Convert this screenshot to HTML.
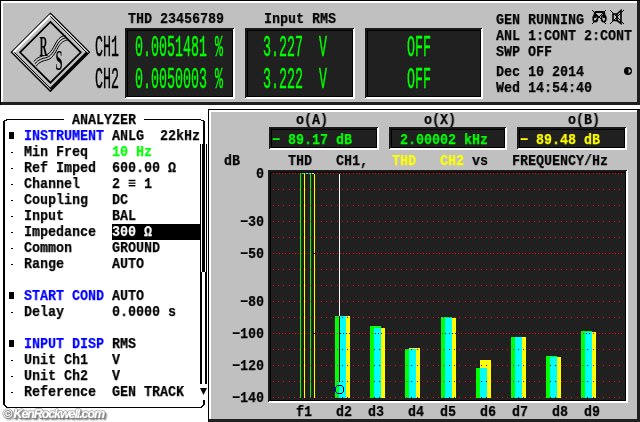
<!DOCTYPE html>
<html><head><meta charset="utf-8"><style>
html,body{margin:0;padding:0;}
body{width:640px;height:422px;overflow:hidden;position:relative;background:#fff;}
.s{position:absolute;font-family:"Liberation Mono",monospace;font-weight:bold;font-size:15px;letter-spacing:0;line-height:16px;white-space:nowrap;transform-origin:0 0;transform:scaleX(0.88889);will-change:transform;-webkit-text-stroke:0.25px currentColor;}
.l{position:absolute;font-family:"Liberation Mono",monospace;font-weight:normal;-webkit-text-stroke:0.2px currentColor;font-size:13.33px;line-height:12px;white-space:nowrap;transform-origin:0 0;transform:scaleY(2.21);will-change:transform;}
</style></head><body>
<div style="position:absolute;left:0px;top:0px;width:640px;height:105px;background:#c0c0c0;"></div>
<div style="position:absolute;left:0px;top:0px;width:640px;height:1px;background:#000;"></div>
<div style="position:absolute;left:0px;top:0px;width:1px;height:105px;background:#000;"></div>
<div style="position:absolute;left:1px;top:1px;width:638px;height:2px;background:#fff;"></div>
<div style="position:absolute;left:1px;top:1px;width:2px;height:103px;background:#fff;"></div>
<div style="position:absolute;left:1px;top:102px;width:639px;height:3px;background:#202020;"></div>
<div style="position:absolute;left:637px;top:1px;width:3px;height:104px;background:#202020;"></div>
<svg style="position:absolute;left:0;top:0;will-change:transform" width="100" height="104" viewBox="0 0 100 104">
<polygon points="50.4,13.299999999999997 89.4,52.3 50.4,91.3 11.399999999999999,52.3" fill="none" stroke="#000" stroke-width="1.3"/>
<polyline points="13.399999999999999,52.3 50.4,15.299999999999997 " fill="none" stroke="#fff" stroke-width="2.2"/>
<polyline points="50.4,14.899999999999997 87.80000000000001,52.3" fill="none" stroke="#fff" stroke-width="1"/>
<polyline points="50.4,16.299999999999997 86.4,52.3" fill="none" stroke="#000" stroke-width="1"/>
<polyline points="87.2,52.3 50.4,89.1" fill="none" stroke="#000" stroke-width="2.6"/>
<polyline points="50.4,88.3 14.399999999999999,52.3" fill="none" stroke="#000" stroke-width="1"/>
<polygon points="50.4,21.9 80.8,52.3 50.4,82.69999999999999 20.0,52.3" fill="none" stroke="#000" stroke-width="1.7"/>
<g fill="none" stroke="#000" stroke-width="1">
<path d="M34.0,61.5 C37.0,57.0 41.0,56.5 46.0,55.0 C51.0,53.5 54.0,46.0 57.0,41.0 C60.0,37.0 62.0,36.0 65.5,35.5"/>
<path d="M35.1,63.8 C38.1,59.3 42.1,58.8 47.1,57.3 C52.1,55.8 55.1,48.3 58.1,43.3 C61.1,39.3 63.1,38.3 66.6,37.8"/>
<path d="M36.2,66.1 C39.2,61.6 43.2,61.1 48.2,59.6 C53.2,58.1 56.2,50.6 59.2,45.6 C62.2,41.6 64.2,40.6 67.7,40.1"/>
</g>
<g transform="translate(39.5 55.8) scale(0.62 1.62)"><text x="0" y="0" font-family="Liberation Serif" font-weight="bold" font-size="18">R</text></g>
<g transform="translate(55.6 70.3) scale(0.7 1.62)"><text x="0" y="0" font-family="Liberation Serif" font-weight="bold" font-size="18">S</text></g>
</svg>
<div style="position:absolute;left:125px;top:28px;width:110px;height:71px;background:#fff;"></div>
<div style="position:absolute;left:125px;top:28px;width:108px;height:69px;background:#000;"></div>
<div style="position:absolute;left:125px;top:28px;width:108px;height:2px;background:#1a1a1a;"></div>
<div style="position:absolute;left:125px;top:28px;width:2px;height:69px;background:#1a1a1a;"></div>
<div style="position:absolute;left:128px;top:31px;width:104px;height:65px;background:#202020;"></div>
<div style="position:absolute;left:233px;top:28px;width:1px;height:1px;background:#000;"></div>
<div style="position:absolute;left:125px;top:97px;width:1px;height:1px;background:#000;"></div>
<div style="position:absolute;left:245px;top:28px;width:110px;height:71px;background:#fff;"></div>
<div style="position:absolute;left:245px;top:28px;width:108px;height:69px;background:#000;"></div>
<div style="position:absolute;left:245px;top:28px;width:108px;height:2px;background:#1a1a1a;"></div>
<div style="position:absolute;left:245px;top:28px;width:2px;height:69px;background:#1a1a1a;"></div>
<div style="position:absolute;left:248px;top:31px;width:104px;height:65px;background:#202020;"></div>
<div style="position:absolute;left:353px;top:28px;width:1px;height:1px;background:#000;"></div>
<div style="position:absolute;left:245px;top:97px;width:1px;height:1px;background:#000;"></div>
<div style="position:absolute;left:365px;top:28px;width:118px;height:71px;background:#fff;"></div>
<div style="position:absolute;left:365px;top:28px;width:116px;height:69px;background:#000;"></div>
<div style="position:absolute;left:365px;top:28px;width:116px;height:2px;background:#1a1a1a;"></div>
<div style="position:absolute;left:365px;top:28px;width:2px;height:69px;background:#1a1a1a;"></div>
<div style="position:absolute;left:368px;top:31px;width:112px;height:65px;background:#202020;"></div>
<div style="position:absolute;left:481px;top:28px;width:1px;height:1px;background:#000;"></div>
<div style="position:absolute;left:365px;top:97px;width:1px;height:1px;background:#000;"></div>
<div class="s" style="left:128px;top:12px;color:#000;">THD&nbsp;23456789</div>
<div class="s" style="left:264px;top:12px;color:#000;">Input&nbsp;RMS</div>
<div class="l" style="left:95px;top:36px;color:#000">CH1</div>
<div class="l" style="left:95px;top:68px;color:#000">CH2</div>
<div class="l" style="left:135px;top:36px;color:#00ff00">0.0051481&nbsp;%</div>
<div class="l" style="left:135px;top:68px;color:#00ff00">0.0050003&nbsp;%</div>
<div class="l" style="left:263px;top:36px;color:#00ff00">3.227&nbsp;&nbsp;V</div>
<div class="l" style="left:263px;top:68px;color:#00ff00">3.222&nbsp;&nbsp;V</div>
<div class="l" style="left:407px;top:36px;color:#00ff00">OFF</div>
<div class="l" style="left:407px;top:68px;color:#00ff00">OFF</div>
<div class="s" style="left:496px;top:13px;color:#000;">GEN&nbsp;RUNNING</div>
<div class="s" style="left:496px;top:29px;color:#000;">ANL&nbsp;1:CONT&nbsp;2:CONT</div>
<div class="s" style="left:496px;top:45px;color:#000;">SWP&nbsp;OFF</div>
<div class="s" style="left:496px;top:65px;color:#000;">Dec&nbsp;10&nbsp;2014</div>
<div class="s" style="left:496px;top:81px;color:#000;">Wed&nbsp;14:54:40</div>
<svg style="position:absolute;left:588px;top:6px" width="50" height="74" viewBox="588 6 50 74">
<g stroke="#000" fill="none">
<path d="M592,10 L606,24 M606,10 L592,24" stroke-width="1"/>
<path d="M594.8,18 V13.5 Q594.8,12 596.5,12 H602.5 Q604.2,12 604.2,13.5 V18" stroke-width="2.2"/>
<ellipse cx="595.3" cy="18.5" rx="2.2" ry="3.2" stroke-width="1.6"/>
<ellipse cx="603.7" cy="18.5" rx="2.2" ry="3.2" stroke-width="1.6"/>
<path d="M610,10 L624,24 M624,10 L610,24" stroke-width="1"/>
<path d="M613,14 H617 V20.5 H613 Z" stroke-width="1.6"/>
<path d="M617,14 L621,10.5 V23.5 L617,20.5" stroke-width="1.6"/>
</g>
<circle cx="628" cy="71" r="4" fill="#000"/>
<polygon points="628.5,68.3 631.3,71 628.5,73.7" fill="#c0c0c0"/>
</svg>
<div style="position:absolute;left:6px;top:119px;width:58px;height:1px;background:#000;"></div>
<div style="position:absolute;left:144px;top:119px;width:57px;height:1px;background:#000;"></div>
<div style="position:absolute;left:4px;top:120px;width:3px;height:1px;background:#000;"></div>
<div style="position:absolute;left:3px;top:121px;width:2px;height:1px;background:#000;"></div>
<div style="position:absolute;left:3px;top:122px;width:2px;height:282px;background:#000;"></div>
<div style="position:absolute;left:3px;top:404px;width:2px;height:1px;background:#000;"></div>
<div style="position:absolute;left:4px;top:405px;width:2px;height:1px;background:#000;"></div>
<div style="position:absolute;left:5px;top:406px;width:2px;height:1px;background:#000;"></div>
<div style="position:absolute;left:6px;top:407px;width:196px;height:1px;background:#000;"></div>
<div style="position:absolute;left:201px;top:120px;width:3px;height:1px;background:#000;"></div>
<div style="position:absolute;left:203px;top:121px;width:2px;height:1px;background:#000;"></div>
<div style="position:absolute;left:203px;top:122px;width:2px;height:22px;background:#000;"></div>
<div style="position:absolute;left:203px;top:400px;width:2px;height:5px;background:#000;"></div>
<div style="position:absolute;left:202px;top:405px;width:2px;height:1px;background:#000;"></div>
<div style="position:absolute;left:201px;top:406px;width:2px;height:1px;background:#000;"></div>
<div class="s" style="left:72px;top:113px;color:#000;">ANALYZER</div>
<div style="position:absolute;left:9px;top:132px;width:5px;height:7px;background:#000;"></div>
<div class="s" style="left:24px;top:129px;color:#0000ff;">INSTRUMENT</div>
<div class="s" style="left:112px;top:129px;color:#000;">ANLG&nbsp;&nbsp;22kHz</div>
<div style="position:absolute;left:11px;top:152px;width:2px;height:1px;background:#000;"></div>
<div class="s" style="left:24px;top:145px;color:#000;">Min&nbsp;Freq</div>
<div class="s" style="left:112px;top:145px;color:#00ff00;">10&nbsp;Hz</div>
<div style="position:absolute;left:11px;top:168px;width:2px;height:1px;background:#000;"></div>
<div class="s" style="left:24px;top:161px;color:#000;">Ref&nbsp;Imped</div>
<div class="s" style="left:112px;top:161px;color:#000;">600.00&nbsp;Ω</div>
<div style="position:absolute;left:11px;top:184px;width:2px;height:1px;background:#000;"></div>
<div class="s" style="left:24px;top:177px;color:#000;">Channel</div>
<div class="s" style="left:112px;top:177px;color:#000;">2&nbsp;≡&nbsp;1</div>
<div style="position:absolute;left:11px;top:200px;width:2px;height:1px;background:#000;"></div>
<div class="s" style="left:24px;top:193px;color:#000;">Coupling</div>
<div class="s" style="left:112px;top:193px;color:#000;">DC</div>
<div style="position:absolute;left:11px;top:216px;width:2px;height:1px;background:#000;"></div>
<div class="s" style="left:24px;top:209px;color:#000;">Input</div>
<div class="s" style="left:112px;top:209px;color:#000;">BAL</div>
<div style="position:absolute;left:11px;top:232px;width:2px;height:1px;background:#000;"></div>
<div class="s" style="left:24px;top:225px;color:#000;">Impedance</div>
<div style="position:absolute;left:112px;top:224px;width:89px;height:16px;background:#000;"></div>
<div class="s" style="left:112px;top:225px;color:#fff;">300&nbsp;Ω</div>
<div style="position:absolute;left:11px;top:248px;width:2px;height:1px;background:#000;"></div>
<div class="s" style="left:24px;top:241px;color:#000;">Common</div>
<div class="s" style="left:112px;top:241px;color:#000;">GROUND</div>
<div style="position:absolute;left:11px;top:264px;width:2px;height:1px;background:#000;"></div>
<div class="s" style="left:24px;top:257px;color:#000;">Range</div>
<div class="s" style="left:112px;top:257px;color:#000;">AUTO</div>
<div style="position:absolute;left:9px;top:292px;width:5px;height:7px;background:#000;"></div>
<div class="s" style="left:24px;top:289px;color:#0000ff;">START&nbsp;COND</div>
<div class="s" style="left:112px;top:289px;color:#000;">AUTO</div>
<div style="position:absolute;left:11px;top:312px;width:2px;height:1px;background:#000;"></div>
<div class="s" style="left:24px;top:305px;color:#000;">Delay</div>
<div class="s" style="left:112px;top:305px;color:#000;">0.0000&nbsp;s</div>
<div style="position:absolute;left:9px;top:340px;width:5px;height:7px;background:#000;"></div>
<div class="s" style="left:24px;top:337px;color:#0000ff;">INPUT&nbsp;DISP</div>
<div class="s" style="left:112px;top:337px;color:#000;">RMS</div>
<div style="position:absolute;left:11px;top:360px;width:2px;height:1px;background:#000;"></div>
<div class="s" style="left:24px;top:353px;color:#000;">Unit&nbsp;Ch1</div>
<div class="s" style="left:112px;top:353px;color:#000;">V</div>
<div style="position:absolute;left:11px;top:376px;width:2px;height:1px;background:#000;"></div>
<div class="s" style="left:24px;top:369px;color:#000;">Unit&nbsp;Ch2</div>
<div class="s" style="left:112px;top:369px;color:#000;">V</div>
<div style="position:absolute;left:11px;top:392px;width:2px;height:1px;background:#000;"></div>
<div class="s" style="left:24px;top:385px;color:#000;">Reference</div>
<div class="s" style="left:112px;top:385px;color:#000;">GEN&nbsp;TRACK</div>
<div style="position:absolute;left:200px;top:144px;width:1px;height:128px;background:#000;"></div>
<div style="position:absolute;left:206px;top:144px;width:1px;height:128px;background:#000;"></div>
<div style="position:absolute;left:202px;top:144px;width:3px;height:128px;background:#000;"></div>
<div style="position:absolute;left:200px;top:272px;width:2px;height:112px;background:#000;"></div>
<div style="position:absolute;left:205px;top:272px;width:2px;height:112px;background:#000;"></div>
<svg style="position:absolute;left:199px;top:387px" width="10" height="10" viewBox="199 387 10 10"><polygon points="200,388 207,388 203.5,395" fill="#000"/></svg>
<div style="position:absolute;left:208px;top:109px;width:432px;height:313px;background:#c0c0c0;"></div>
<div style="position:absolute;left:208px;top:109px;width:432px;height:1px;background:#000;"></div>
<div style="position:absolute;left:208px;top:109px;width:1px;height:313px;background:#000;"></div>
<div style="position:absolute;left:209px;top:110px;width:430px;height:2px;background:#fff;"></div>
<div style="position:absolute;left:209px;top:110px;width:2px;height:311px;background:#fff;"></div>
<div style="position:absolute;left:209px;top:419px;width:431px;height:3px;background:#202020;"></div>
<div style="position:absolute;left:637px;top:110px;width:3px;height:312px;background:#202020;"></div>
<div class="s" style="left:296px;top:113px;color:#000;">o(A)</div>
<div class="s" style="left:424px;top:113px;color:#000;">o(X)</div>
<div class="s" style="left:568px;top:113px;color:#000;">o(B)</div>
<div style="position:absolute;left:269px;top:127px;width:110px;height:23px;background:#fff;"></div>
<div style="position:absolute;left:269px;top:127px;width:108px;height:21px;background:#000;"></div>
<div style="position:absolute;left:269px;top:127px;width:108px;height:2px;background:#1a1a1a;"></div>
<div style="position:absolute;left:269px;top:127px;width:2px;height:21px;background:#1a1a1a;"></div>
<div style="position:absolute;left:272px;top:130px;width:104px;height:17px;background:#202020;"></div>
<div style="position:absolute;left:377px;top:127px;width:1px;height:1px;background:#000;"></div>
<div style="position:absolute;left:269px;top:148px;width:1px;height:1px;background:#000;"></div>
<div style="position:absolute;left:389px;top:127px;width:118px;height:23px;background:#fff;"></div>
<div style="position:absolute;left:389px;top:127px;width:116px;height:21px;background:#000;"></div>
<div style="position:absolute;left:389px;top:127px;width:116px;height:2px;background:#1a1a1a;"></div>
<div style="position:absolute;left:389px;top:127px;width:2px;height:21px;background:#1a1a1a;"></div>
<div style="position:absolute;left:392px;top:130px;width:112px;height:17px;background:#202020;"></div>
<div style="position:absolute;left:505px;top:127px;width:1px;height:1px;background:#000;"></div>
<div style="position:absolute;left:389px;top:148px;width:1px;height:1px;background:#000;"></div>
<div style="position:absolute;left:517px;top:127px;width:110px;height:23px;background:#fff;"></div>
<div style="position:absolute;left:517px;top:127px;width:108px;height:21px;background:#000;"></div>
<div style="position:absolute;left:517px;top:127px;width:108px;height:2px;background:#1a1a1a;"></div>
<div style="position:absolute;left:517px;top:127px;width:2px;height:21px;background:#1a1a1a;"></div>
<div style="position:absolute;left:520px;top:130px;width:104px;height:17px;background:#202020;"></div>
<div style="position:absolute;left:625px;top:127px;width:1px;height:1px;background:#000;"></div>
<div style="position:absolute;left:517px;top:148px;width:1px;height:1px;background:#000;"></div>
<div class="s" style="left:272px;top:133px;color:#00ff00;">−&nbsp;89.17&nbsp;dB</div>
<div class="s" style="left:400px;top:133px;color:#00ff00;">2.00002&nbsp;kHz</div>
<div class="s" style="left:520px;top:133px;color:#ffff00;">−&nbsp;89.48&nbsp;dB</div>
<div class="s" style="left:224px;top:154px;color:#000;">dB</div>
<div class="s" style="left:288px;top:154px;color:#000;">THD&nbsp;&nbsp;&nbsp;CH1,</div>
<div class="s" style="left:392px;top:154px;color:#ffff00;">THD&nbsp;&nbsp;&nbsp;CH2</div>
<div class="s" style="left:472px;top:154px;color:#000;">vs&nbsp;&nbsp;&nbsp;FREQUENCY/Hz</div>
<div class="s" style="left:256px;top:167px;color:#000;">0</div>
<div class="s" style="left:240px;top:215px;color:#000;">−30</div>
<div class="s" style="left:240px;top:247px;color:#000;">−50</div>
<div class="s" style="left:240px;top:295px;color:#000;">−80</div>
<div class="s" style="left:232px;top:327px;color:#000;">−100</div>
<div class="s" style="left:232px;top:359px;color:#000;">−120</div>
<div class="s" style="left:232px;top:391px;color:#000;">−140</div>
<div class="s" style="left:296px;top:405px;color:#000;">f1</div>
<div class="s" style="left:336px;top:405px;color:#000;">d2</div>
<div class="s" style="left:368px;top:405px;color:#000;">d3</div>
<div class="s" style="left:408px;top:405px;color:#000;">d4</div>
<div class="s" style="left:440px;top:405px;color:#000;">d5</div>
<div class="s" style="left:480px;top:405px;color:#000;">d6</div>
<div class="s" style="left:512px;top:405px;color:#000;">d7</div>
<div class="s" style="left:552px;top:405px;color:#000;">d8</div>
<div class="s" style="left:584px;top:405px;color:#000;">d9</div>
<svg style="position:absolute;left:0;top:0" width="640" height="422" viewBox="0 0 640 422" shape-rendering="crispEdges">
</svg>
<div style="position:absolute;left:268px;top:170px;width:360px;height:233px;background:#fff;"></div>
<div style="position:absolute;left:268px;top:170px;width:358px;height:231px;background:#000;"></div>
<div style="position:absolute;left:268px;top:170px;width:358px;height:2px;background:#1a1a1a;"></div>
<div style="position:absolute;left:268px;top:170px;width:2px;height:231px;background:#1a1a1a;"></div>
<div style="position:absolute;left:271px;top:173px;width:354px;height:227px;background:#202020;"></div>
<div style="position:absolute;left:626px;top:170px;width:1px;height:1px;background:#000;"></div>
<div style="position:absolute;left:268px;top:401px;width:1px;height:1px;background:#000;"></div>
<svg style="position:absolute;left:0;top:0" width="640" height="422" viewBox="0 0 640 422" shape-rendering="crispEdges">
<rect x="335" y="316" width="11" height="82" fill="#00ff00"/>
<rect x="339" y="316" width="11" height="82" fill="#ffff00"/>
<rect x="339" y="316" width="7" height="82" fill="#00ffff"/>
<rect x="370" y="326" width="11" height="72" fill="#00ff00"/>
<rect x="374" y="328" width="11" height="70" fill="#ffff00"/>
<rect x="374" y="328" width="7" height="70" fill="#00ffff"/>
<rect x="405" y="349" width="11" height="49" fill="#00ff00"/>
<rect x="409" y="348" width="11" height="50" fill="#ffff00"/>
<rect x="409" y="349" width="7" height="49" fill="#00ffff"/>
<rect x="441" y="317" width="11" height="81" fill="#00ff00"/>
<rect x="445" y="318" width="11" height="80" fill="#ffff00"/>
<rect x="445" y="318" width="7" height="80" fill="#00ffff"/>
<rect x="476" y="368" width="11" height="30" fill="#00ff00"/>
<rect x="480" y="360" width="11" height="38" fill="#ffff00"/>
<rect x="480" y="368" width="7" height="30" fill="#00ffff"/>
<rect x="511" y="337" width="11" height="61" fill="#00ff00"/>
<rect x="515" y="337" width="11" height="61" fill="#ffff00"/>
<rect x="515" y="337" width="7" height="61" fill="#00ffff"/>
<rect x="546" y="356" width="11" height="42" fill="#00ff00"/>
<rect x="550" y="357" width="11" height="41" fill="#ffff00"/>
<rect x="550" y="357" width="7" height="41" fill="#00ffff"/>
<rect x="581" y="331" width="11" height="67" fill="#00ff00"/>
<rect x="585" y="332" width="11" height="66" fill="#ffff00"/>
<rect x="585" y="332" width="7" height="66" fill="#00ffff"/>
<rect x="300" y="173" width="1" height="225" fill="#00ff00"/>
<rect x="310" y="173" width="1" height="225" fill="#00ff00"/>
<rect x="304" y="173" width="1" height="225" fill="#ffff00"/>
<rect x="314" y="173" width="1" height="225" fill="#ffff00"/>
<rect x="300" y="173" width="4" height="1" fill="#00ff00"/>
<rect x="304" y="173" width="7" height="1" fill="#00ffff"/>
<rect x="311" y="173" width="3" height="1" fill="#ffff00"/>
<rect x="273" y="173" width="1" height="1" fill="#ff0000"/>
<rect x="276" y="173" width="1" height="1" fill="#ff0000"/>
<rect x="279" y="173" width="1" height="1" fill="#ff0000"/>
<rect x="282" y="173" width="1" height="1" fill="#ff0000"/>
<rect x="285" y="173" width="1" height="1" fill="#ff0000"/>
<rect x="289" y="173" width="1" height="1" fill="#ff0000"/>
<rect x="292" y="173" width="1" height="1" fill="#ff0000"/>
<rect x="295" y="173" width="1" height="1" fill="#ff0000"/>
<rect x="298" y="173" width="1" height="1" fill="#ff0000"/>
<rect x="301" y="173" width="1" height="1" fill="#ff0000"/>
<rect x="305" y="173" width="1" height="1" fill="#ff0000"/>
<rect x="308" y="173" width="1" height="1" fill="#ff0000"/>
<rect x="311" y="173" width="1" height="1" fill="#ff0000"/>
<rect x="314" y="173" width="1" height="1" fill="#0000ff"/>
<rect x="317" y="173" width="1" height="1" fill="#ff0000"/>
<rect x="321" y="173" width="1" height="1" fill="#ff0000"/>
<rect x="324" y="173" width="1" height="1" fill="#ff0000"/>
<rect x="327" y="173" width="1" height="1" fill="#ff0000"/>
<rect x="330" y="173" width="1" height="1" fill="#ff0000"/>
<rect x="333" y="173" width="1" height="1" fill="#ff0000"/>
<rect x="337" y="173" width="1" height="1" fill="#ff0000"/>
<rect x="340" y="173" width="1" height="1" fill="#ff0000"/>
<rect x="343" y="173" width="1" height="1" fill="#ff0000"/>
<rect x="346" y="173" width="1" height="1" fill="#ff0000"/>
<rect x="349" y="173" width="1" height="1" fill="#ff0000"/>
<rect x="353" y="173" width="1" height="1" fill="#ff0000"/>
<rect x="356" y="173" width="1" height="1" fill="#ff0000"/>
<rect x="359" y="173" width="1" height="1" fill="#ff0000"/>
<rect x="362" y="173" width="1" height="1" fill="#ff0000"/>
<rect x="365" y="173" width="1" height="1" fill="#ff0000"/>
<rect x="369" y="173" width="1" height="1" fill="#ff0000"/>
<rect x="372" y="173" width="1" height="1" fill="#ff0000"/>
<rect x="375" y="173" width="1" height="1" fill="#ff0000"/>
<rect x="378" y="173" width="1" height="1" fill="#ff0000"/>
<rect x="381" y="173" width="1" height="1" fill="#ff0000"/>
<rect x="385" y="173" width="1" height="1" fill="#ff0000"/>
<rect x="388" y="173" width="1" height="1" fill="#ff0000"/>
<rect x="391" y="173" width="1" height="1" fill="#ff0000"/>
<rect x="394" y="173" width="1" height="1" fill="#ff0000"/>
<rect x="397" y="173" width="1" height="1" fill="#ff0000"/>
<rect x="401" y="173" width="1" height="1" fill="#ff0000"/>
<rect x="404" y="173" width="1" height="1" fill="#ff0000"/>
<rect x="407" y="173" width="1" height="1" fill="#ff0000"/>
<rect x="410" y="173" width="1" height="1" fill="#ff0000"/>
<rect x="413" y="173" width="1" height="1" fill="#ff0000"/>
<rect x="417" y="173" width="1" height="1" fill="#ff0000"/>
<rect x="420" y="173" width="1" height="1" fill="#ff0000"/>
<rect x="423" y="173" width="1" height="1" fill="#ff0000"/>
<rect x="426" y="173" width="1" height="1" fill="#ff0000"/>
<rect x="429" y="173" width="1" height="1" fill="#ff0000"/>
<rect x="433" y="173" width="1" height="1" fill="#ff0000"/>
<rect x="436" y="173" width="1" height="1" fill="#ff0000"/>
<rect x="439" y="173" width="1" height="1" fill="#ff0000"/>
<rect x="442" y="173" width="1" height="1" fill="#ff0000"/>
<rect x="445" y="173" width="1" height="1" fill="#ff0000"/>
<rect x="449" y="173" width="1" height="1" fill="#ff0000"/>
<rect x="452" y="173" width="1" height="1" fill="#ff0000"/>
<rect x="455" y="173" width="1" height="1" fill="#ff0000"/>
<rect x="458" y="173" width="1" height="1" fill="#ff0000"/>
<rect x="461" y="173" width="1" height="1" fill="#ff0000"/>
<rect x="465" y="173" width="1" height="1" fill="#ff0000"/>
<rect x="468" y="173" width="1" height="1" fill="#ff0000"/>
<rect x="471" y="173" width="1" height="1" fill="#ff0000"/>
<rect x="474" y="173" width="1" height="1" fill="#ff0000"/>
<rect x="477" y="173" width="1" height="1" fill="#ff0000"/>
<rect x="481" y="173" width="1" height="1" fill="#ff0000"/>
<rect x="484" y="173" width="1" height="1" fill="#ff0000"/>
<rect x="487" y="173" width="1" height="1" fill="#ff0000"/>
<rect x="490" y="173" width="1" height="1" fill="#ff0000"/>
<rect x="493" y="173" width="1" height="1" fill="#ff0000"/>
<rect x="497" y="173" width="1" height="1" fill="#ff0000"/>
<rect x="500" y="173" width="1" height="1" fill="#ff0000"/>
<rect x="503" y="173" width="1" height="1" fill="#ff0000"/>
<rect x="506" y="173" width="1" height="1" fill="#ff0000"/>
<rect x="509" y="173" width="1" height="1" fill="#ff0000"/>
<rect x="513" y="173" width="1" height="1" fill="#ff0000"/>
<rect x="516" y="173" width="1" height="1" fill="#ff0000"/>
<rect x="519" y="173" width="1" height="1" fill="#ff0000"/>
<rect x="522" y="173" width="1" height="1" fill="#ff0000"/>
<rect x="525" y="173" width="1" height="1" fill="#ff0000"/>
<rect x="529" y="173" width="1" height="1" fill="#ff0000"/>
<rect x="532" y="173" width="1" height="1" fill="#ff0000"/>
<rect x="535" y="173" width="1" height="1" fill="#ff0000"/>
<rect x="538" y="173" width="1" height="1" fill="#ff0000"/>
<rect x="541" y="173" width="1" height="1" fill="#ff0000"/>
<rect x="545" y="173" width="1" height="1" fill="#ff0000"/>
<rect x="548" y="173" width="1" height="1" fill="#ff0000"/>
<rect x="551" y="173" width="1" height="1" fill="#ff0000"/>
<rect x="554" y="173" width="1" height="1" fill="#ff0000"/>
<rect x="557" y="173" width="1" height="1" fill="#ff0000"/>
<rect x="561" y="173" width="1" height="1" fill="#ff0000"/>
<rect x="564" y="173" width="1" height="1" fill="#ff0000"/>
<rect x="567" y="173" width="1" height="1" fill="#ff0000"/>
<rect x="570" y="173" width="1" height="1" fill="#ff0000"/>
<rect x="573" y="173" width="1" height="1" fill="#ff0000"/>
<rect x="577" y="173" width="1" height="1" fill="#ff0000"/>
<rect x="580" y="173" width="1" height="1" fill="#ff0000"/>
<rect x="583" y="173" width="1" height="1" fill="#ff0000"/>
<rect x="586" y="173" width="1" height="1" fill="#ff0000"/>
<rect x="589" y="173" width="1" height="1" fill="#ff0000"/>
<rect x="593" y="173" width="1" height="1" fill="#ff0000"/>
<rect x="596" y="173" width="1" height="1" fill="#ff0000"/>
<rect x="599" y="173" width="1" height="1" fill="#ff0000"/>
<rect x="602" y="173" width="1" height="1" fill="#ff0000"/>
<rect x="605" y="173" width="1" height="1" fill="#ff0000"/>
<rect x="609" y="173" width="1" height="1" fill="#ff0000"/>
<rect x="612" y="173" width="1" height="1" fill="#ff0000"/>
<rect x="615" y="173" width="1" height="1" fill="#ff0000"/>
<rect x="618" y="173" width="1" height="1" fill="#ff0000"/>
<rect x="621" y="173" width="1" height="1" fill="#ff0000"/>
<rect x="273" y="189" width="1" height="1" fill="#ff0000"/>
<rect x="278" y="189" width="1" height="1" fill="#ff0000"/>
<rect x="283" y="189" width="1" height="1" fill="#ff0000"/>
<rect x="289" y="189" width="1" height="1" fill="#ff0000"/>
<rect x="294" y="189" width="1" height="1" fill="#ff0000"/>
<rect x="299" y="189" width="1" height="1" fill="#ff0000"/>
<rect x="305" y="189" width="1" height="1" fill="#ff0000"/>
<rect x="310" y="189" width="1" height="1" fill="#ff00ff"/>
<rect x="315" y="189" width="1" height="1" fill="#ff0000"/>
<rect x="321" y="189" width="1" height="1" fill="#ff0000"/>
<rect x="326" y="189" width="1" height="1" fill="#ff0000"/>
<rect x="331" y="189" width="1" height="1" fill="#ff0000"/>
<rect x="337" y="189" width="1" height="1" fill="#ff0000"/>
<rect x="342" y="189" width="1" height="1" fill="#ff0000"/>
<rect x="347" y="189" width="1" height="1" fill="#ff0000"/>
<rect x="353" y="189" width="1" height="1" fill="#ff0000"/>
<rect x="358" y="189" width="1" height="1" fill="#ff0000"/>
<rect x="363" y="189" width="1" height="1" fill="#ff0000"/>
<rect x="369" y="189" width="1" height="1" fill="#ff0000"/>
<rect x="374" y="189" width="1" height="1" fill="#ff0000"/>
<rect x="379" y="189" width="1" height="1" fill="#ff0000"/>
<rect x="385" y="189" width="1" height="1" fill="#ff0000"/>
<rect x="390" y="189" width="1" height="1" fill="#ff0000"/>
<rect x="395" y="189" width="1" height="1" fill="#ff0000"/>
<rect x="401" y="189" width="1" height="1" fill="#ff0000"/>
<rect x="406" y="189" width="1" height="1" fill="#ff0000"/>
<rect x="411" y="189" width="1" height="1" fill="#ff0000"/>
<rect x="417" y="189" width="1" height="1" fill="#ff0000"/>
<rect x="422" y="189" width="1" height="1" fill="#ff0000"/>
<rect x="427" y="189" width="1" height="1" fill="#ff0000"/>
<rect x="433" y="189" width="1" height="1" fill="#ff0000"/>
<rect x="438" y="189" width="1" height="1" fill="#ff0000"/>
<rect x="443" y="189" width="1" height="1" fill="#ff0000"/>
<rect x="449" y="189" width="1" height="1" fill="#ff0000"/>
<rect x="454" y="189" width="1" height="1" fill="#ff0000"/>
<rect x="459" y="189" width="1" height="1" fill="#ff0000"/>
<rect x="465" y="189" width="1" height="1" fill="#ff0000"/>
<rect x="470" y="189" width="1" height="1" fill="#ff0000"/>
<rect x="475" y="189" width="1" height="1" fill="#ff0000"/>
<rect x="481" y="189" width="1" height="1" fill="#ff0000"/>
<rect x="486" y="189" width="1" height="1" fill="#ff0000"/>
<rect x="491" y="189" width="1" height="1" fill="#ff0000"/>
<rect x="497" y="189" width="1" height="1" fill="#ff0000"/>
<rect x="502" y="189" width="1" height="1" fill="#ff0000"/>
<rect x="507" y="189" width="1" height="1" fill="#ff0000"/>
<rect x="513" y="189" width="1" height="1" fill="#ff0000"/>
<rect x="518" y="189" width="1" height="1" fill="#ff0000"/>
<rect x="523" y="189" width="1" height="1" fill="#ff0000"/>
<rect x="529" y="189" width="1" height="1" fill="#ff0000"/>
<rect x="534" y="189" width="1" height="1" fill="#ff0000"/>
<rect x="539" y="189" width="1" height="1" fill="#ff0000"/>
<rect x="545" y="189" width="1" height="1" fill="#ff0000"/>
<rect x="550" y="189" width="1" height="1" fill="#ff0000"/>
<rect x="555" y="189" width="1" height="1" fill="#ff0000"/>
<rect x="561" y="189" width="1" height="1" fill="#ff0000"/>
<rect x="566" y="189" width="1" height="1" fill="#ff0000"/>
<rect x="571" y="189" width="1" height="1" fill="#ff0000"/>
<rect x="577" y="189" width="1" height="1" fill="#ff0000"/>
<rect x="582" y="189" width="1" height="1" fill="#ff0000"/>
<rect x="587" y="189" width="1" height="1" fill="#ff0000"/>
<rect x="593" y="189" width="1" height="1" fill="#ff0000"/>
<rect x="598" y="189" width="1" height="1" fill="#ff0000"/>
<rect x="603" y="189" width="1" height="1" fill="#ff0000"/>
<rect x="609" y="189" width="1" height="1" fill="#ff0000"/>
<rect x="614" y="189" width="1" height="1" fill="#ff0000"/>
<rect x="619" y="189" width="1" height="1" fill="#ff0000"/>
<rect x="273" y="205" width="1" height="1" fill="#ff0000"/>
<rect x="278" y="205" width="1" height="1" fill="#ff0000"/>
<rect x="283" y="205" width="1" height="1" fill="#ff0000"/>
<rect x="289" y="205" width="1" height="1" fill="#ff0000"/>
<rect x="294" y="205" width="1" height="1" fill="#ff0000"/>
<rect x="299" y="205" width="1" height="1" fill="#ff0000"/>
<rect x="305" y="205" width="1" height="1" fill="#ff0000"/>
<rect x="310" y="205" width="1" height="1" fill="#ff00ff"/>
<rect x="315" y="205" width="1" height="1" fill="#ff0000"/>
<rect x="321" y="205" width="1" height="1" fill="#ff0000"/>
<rect x="326" y="205" width="1" height="1" fill="#ff0000"/>
<rect x="331" y="205" width="1" height="1" fill="#ff0000"/>
<rect x="337" y="205" width="1" height="1" fill="#ff0000"/>
<rect x="342" y="205" width="1" height="1" fill="#ff0000"/>
<rect x="347" y="205" width="1" height="1" fill="#ff0000"/>
<rect x="353" y="205" width="1" height="1" fill="#ff0000"/>
<rect x="358" y="205" width="1" height="1" fill="#ff0000"/>
<rect x="363" y="205" width="1" height="1" fill="#ff0000"/>
<rect x="369" y="205" width="1" height="1" fill="#ff0000"/>
<rect x="374" y="205" width="1" height="1" fill="#ff0000"/>
<rect x="379" y="205" width="1" height="1" fill="#ff0000"/>
<rect x="385" y="205" width="1" height="1" fill="#ff0000"/>
<rect x="390" y="205" width="1" height="1" fill="#ff0000"/>
<rect x="395" y="205" width="1" height="1" fill="#ff0000"/>
<rect x="401" y="205" width="1" height="1" fill="#ff0000"/>
<rect x="406" y="205" width="1" height="1" fill="#ff0000"/>
<rect x="411" y="205" width="1" height="1" fill="#ff0000"/>
<rect x="417" y="205" width="1" height="1" fill="#ff0000"/>
<rect x="422" y="205" width="1" height="1" fill="#ff0000"/>
<rect x="427" y="205" width="1" height="1" fill="#ff0000"/>
<rect x="433" y="205" width="1" height="1" fill="#ff0000"/>
<rect x="438" y="205" width="1" height="1" fill="#ff0000"/>
<rect x="443" y="205" width="1" height="1" fill="#ff0000"/>
<rect x="449" y="205" width="1" height="1" fill="#ff0000"/>
<rect x="454" y="205" width="1" height="1" fill="#ff0000"/>
<rect x="459" y="205" width="1" height="1" fill="#ff0000"/>
<rect x="465" y="205" width="1" height="1" fill="#ff0000"/>
<rect x="470" y="205" width="1" height="1" fill="#ff0000"/>
<rect x="475" y="205" width="1" height="1" fill="#ff0000"/>
<rect x="481" y="205" width="1" height="1" fill="#ff0000"/>
<rect x="486" y="205" width="1" height="1" fill="#ff0000"/>
<rect x="491" y="205" width="1" height="1" fill="#ff0000"/>
<rect x="497" y="205" width="1" height="1" fill="#ff0000"/>
<rect x="502" y="205" width="1" height="1" fill="#ff0000"/>
<rect x="507" y="205" width="1" height="1" fill="#ff0000"/>
<rect x="513" y="205" width="1" height="1" fill="#ff0000"/>
<rect x="518" y="205" width="1" height="1" fill="#ff0000"/>
<rect x="523" y="205" width="1" height="1" fill="#ff0000"/>
<rect x="529" y="205" width="1" height="1" fill="#ff0000"/>
<rect x="534" y="205" width="1" height="1" fill="#ff0000"/>
<rect x="539" y="205" width="1" height="1" fill="#ff0000"/>
<rect x="545" y="205" width="1" height="1" fill="#ff0000"/>
<rect x="550" y="205" width="1" height="1" fill="#ff0000"/>
<rect x="555" y="205" width="1" height="1" fill="#ff0000"/>
<rect x="561" y="205" width="1" height="1" fill="#ff0000"/>
<rect x="566" y="205" width="1" height="1" fill="#ff0000"/>
<rect x="571" y="205" width="1" height="1" fill="#ff0000"/>
<rect x="577" y="205" width="1" height="1" fill="#ff0000"/>
<rect x="582" y="205" width="1" height="1" fill="#ff0000"/>
<rect x="587" y="205" width="1" height="1" fill="#ff0000"/>
<rect x="593" y="205" width="1" height="1" fill="#ff0000"/>
<rect x="598" y="205" width="1" height="1" fill="#ff0000"/>
<rect x="603" y="205" width="1" height="1" fill="#ff0000"/>
<rect x="609" y="205" width="1" height="1" fill="#ff0000"/>
<rect x="614" y="205" width="1" height="1" fill="#ff0000"/>
<rect x="619" y="205" width="1" height="1" fill="#ff0000"/>
<rect x="273" y="221" width="1" height="1" fill="#ff0000"/>
<rect x="278" y="221" width="1" height="1" fill="#ff0000"/>
<rect x="283" y="221" width="1" height="1" fill="#ff0000"/>
<rect x="289" y="221" width="1" height="1" fill="#ff0000"/>
<rect x="294" y="221" width="1" height="1" fill="#ff0000"/>
<rect x="299" y="221" width="1" height="1" fill="#ff0000"/>
<rect x="305" y="221" width="1" height="1" fill="#ff0000"/>
<rect x="310" y="221" width="1" height="1" fill="#ff00ff"/>
<rect x="315" y="221" width="1" height="1" fill="#ff0000"/>
<rect x="321" y="221" width="1" height="1" fill="#ff0000"/>
<rect x="326" y="221" width="1" height="1" fill="#ff0000"/>
<rect x="331" y="221" width="1" height="1" fill="#ff0000"/>
<rect x="337" y="221" width="1" height="1" fill="#ff0000"/>
<rect x="342" y="221" width="1" height="1" fill="#ff0000"/>
<rect x="347" y="221" width="1" height="1" fill="#ff0000"/>
<rect x="353" y="221" width="1" height="1" fill="#ff0000"/>
<rect x="358" y="221" width="1" height="1" fill="#ff0000"/>
<rect x="363" y="221" width="1" height="1" fill="#ff0000"/>
<rect x="369" y="221" width="1" height="1" fill="#ff0000"/>
<rect x="374" y="221" width="1" height="1" fill="#ff0000"/>
<rect x="379" y="221" width="1" height="1" fill="#ff0000"/>
<rect x="385" y="221" width="1" height="1" fill="#ff0000"/>
<rect x="390" y="221" width="1" height="1" fill="#ff0000"/>
<rect x="395" y="221" width="1" height="1" fill="#ff0000"/>
<rect x="401" y="221" width="1" height="1" fill="#ff0000"/>
<rect x="406" y="221" width="1" height="1" fill="#ff0000"/>
<rect x="411" y="221" width="1" height="1" fill="#ff0000"/>
<rect x="417" y="221" width="1" height="1" fill="#ff0000"/>
<rect x="422" y="221" width="1" height="1" fill="#ff0000"/>
<rect x="427" y="221" width="1" height="1" fill="#ff0000"/>
<rect x="433" y="221" width="1" height="1" fill="#ff0000"/>
<rect x="438" y="221" width="1" height="1" fill="#ff0000"/>
<rect x="443" y="221" width="1" height="1" fill="#ff0000"/>
<rect x="449" y="221" width="1" height="1" fill="#ff0000"/>
<rect x="454" y="221" width="1" height="1" fill="#ff0000"/>
<rect x="459" y="221" width="1" height="1" fill="#ff0000"/>
<rect x="465" y="221" width="1" height="1" fill="#ff0000"/>
<rect x="470" y="221" width="1" height="1" fill="#ff0000"/>
<rect x="475" y="221" width="1" height="1" fill="#ff0000"/>
<rect x="481" y="221" width="1" height="1" fill="#ff0000"/>
<rect x="486" y="221" width="1" height="1" fill="#ff0000"/>
<rect x="491" y="221" width="1" height="1" fill="#ff0000"/>
<rect x="497" y="221" width="1" height="1" fill="#ff0000"/>
<rect x="502" y="221" width="1" height="1" fill="#ff0000"/>
<rect x="507" y="221" width="1" height="1" fill="#ff0000"/>
<rect x="513" y="221" width="1" height="1" fill="#ff0000"/>
<rect x="518" y="221" width="1" height="1" fill="#ff0000"/>
<rect x="523" y="221" width="1" height="1" fill="#ff0000"/>
<rect x="529" y="221" width="1" height="1" fill="#ff0000"/>
<rect x="534" y="221" width="1" height="1" fill="#ff0000"/>
<rect x="539" y="221" width="1" height="1" fill="#ff0000"/>
<rect x="545" y="221" width="1" height="1" fill="#ff0000"/>
<rect x="550" y="221" width="1" height="1" fill="#ff0000"/>
<rect x="555" y="221" width="1" height="1" fill="#ff0000"/>
<rect x="561" y="221" width="1" height="1" fill="#ff0000"/>
<rect x="566" y="221" width="1" height="1" fill="#ff0000"/>
<rect x="571" y="221" width="1" height="1" fill="#ff0000"/>
<rect x="577" y="221" width="1" height="1" fill="#ff0000"/>
<rect x="582" y="221" width="1" height="1" fill="#ff0000"/>
<rect x="587" y="221" width="1" height="1" fill="#ff0000"/>
<rect x="593" y="221" width="1" height="1" fill="#ff0000"/>
<rect x="598" y="221" width="1" height="1" fill="#ff0000"/>
<rect x="603" y="221" width="1" height="1" fill="#ff0000"/>
<rect x="609" y="221" width="1" height="1" fill="#ff0000"/>
<rect x="614" y="221" width="1" height="1" fill="#ff0000"/>
<rect x="619" y="221" width="1" height="1" fill="#ff0000"/>
<rect x="273" y="237" width="1" height="1" fill="#ff0000"/>
<rect x="278" y="237" width="1" height="1" fill="#ff0000"/>
<rect x="283" y="237" width="1" height="1" fill="#ff0000"/>
<rect x="289" y="237" width="1" height="1" fill="#ff0000"/>
<rect x="294" y="237" width="1" height="1" fill="#ff0000"/>
<rect x="299" y="237" width="1" height="1" fill="#ff0000"/>
<rect x="305" y="237" width="1" height="1" fill="#ff0000"/>
<rect x="310" y="237" width="1" height="1" fill="#ff00ff"/>
<rect x="315" y="237" width="1" height="1" fill="#ff0000"/>
<rect x="321" y="237" width="1" height="1" fill="#ff0000"/>
<rect x="326" y="237" width="1" height="1" fill="#ff0000"/>
<rect x="331" y="237" width="1" height="1" fill="#ff0000"/>
<rect x="337" y="237" width="1" height="1" fill="#ff0000"/>
<rect x="342" y="237" width="1" height="1" fill="#ff0000"/>
<rect x="347" y="237" width="1" height="1" fill="#ff0000"/>
<rect x="353" y="237" width="1" height="1" fill="#ff0000"/>
<rect x="358" y="237" width="1" height="1" fill="#ff0000"/>
<rect x="363" y="237" width="1" height="1" fill="#ff0000"/>
<rect x="369" y="237" width="1" height="1" fill="#ff0000"/>
<rect x="374" y="237" width="1" height="1" fill="#ff0000"/>
<rect x="379" y="237" width="1" height="1" fill="#ff0000"/>
<rect x="385" y="237" width="1" height="1" fill="#ff0000"/>
<rect x="390" y="237" width="1" height="1" fill="#ff0000"/>
<rect x="395" y="237" width="1" height="1" fill="#ff0000"/>
<rect x="401" y="237" width="1" height="1" fill="#ff0000"/>
<rect x="406" y="237" width="1" height="1" fill="#ff0000"/>
<rect x="411" y="237" width="1" height="1" fill="#ff0000"/>
<rect x="417" y="237" width="1" height="1" fill="#ff0000"/>
<rect x="422" y="237" width="1" height="1" fill="#ff0000"/>
<rect x="427" y="237" width="1" height="1" fill="#ff0000"/>
<rect x="433" y="237" width="1" height="1" fill="#ff0000"/>
<rect x="438" y="237" width="1" height="1" fill="#ff0000"/>
<rect x="443" y="237" width="1" height="1" fill="#ff0000"/>
<rect x="449" y="237" width="1" height="1" fill="#ff0000"/>
<rect x="454" y="237" width="1" height="1" fill="#ff0000"/>
<rect x="459" y="237" width="1" height="1" fill="#ff0000"/>
<rect x="465" y="237" width="1" height="1" fill="#ff0000"/>
<rect x="470" y="237" width="1" height="1" fill="#ff0000"/>
<rect x="475" y="237" width="1" height="1" fill="#ff0000"/>
<rect x="481" y="237" width="1" height="1" fill="#ff0000"/>
<rect x="486" y="237" width="1" height="1" fill="#ff0000"/>
<rect x="491" y="237" width="1" height="1" fill="#ff0000"/>
<rect x="497" y="237" width="1" height="1" fill="#ff0000"/>
<rect x="502" y="237" width="1" height="1" fill="#ff0000"/>
<rect x="507" y="237" width="1" height="1" fill="#ff0000"/>
<rect x="513" y="237" width="1" height="1" fill="#ff0000"/>
<rect x="518" y="237" width="1" height="1" fill="#ff0000"/>
<rect x="523" y="237" width="1" height="1" fill="#ff0000"/>
<rect x="529" y="237" width="1" height="1" fill="#ff0000"/>
<rect x="534" y="237" width="1" height="1" fill="#ff0000"/>
<rect x="539" y="237" width="1" height="1" fill="#ff0000"/>
<rect x="545" y="237" width="1" height="1" fill="#ff0000"/>
<rect x="550" y="237" width="1" height="1" fill="#ff0000"/>
<rect x="555" y="237" width="1" height="1" fill="#ff0000"/>
<rect x="561" y="237" width="1" height="1" fill="#ff0000"/>
<rect x="566" y="237" width="1" height="1" fill="#ff0000"/>
<rect x="571" y="237" width="1" height="1" fill="#ff0000"/>
<rect x="577" y="237" width="1" height="1" fill="#ff0000"/>
<rect x="582" y="237" width="1" height="1" fill="#ff0000"/>
<rect x="587" y="237" width="1" height="1" fill="#ff0000"/>
<rect x="593" y="237" width="1" height="1" fill="#ff0000"/>
<rect x="598" y="237" width="1" height="1" fill="#ff0000"/>
<rect x="603" y="237" width="1" height="1" fill="#ff0000"/>
<rect x="609" y="237" width="1" height="1" fill="#ff0000"/>
<rect x="614" y="237" width="1" height="1" fill="#ff0000"/>
<rect x="619" y="237" width="1" height="1" fill="#ff0000"/>
<rect x="273" y="253" width="1" height="1" fill="#ff0000"/>
<rect x="276" y="253" width="1" height="1" fill="#ff0000"/>
<rect x="279" y="253" width="1" height="1" fill="#ff0000"/>
<rect x="282" y="253" width="1" height="1" fill="#ff0000"/>
<rect x="285" y="253" width="1" height="1" fill="#ff0000"/>
<rect x="289" y="253" width="1" height="1" fill="#ff0000"/>
<rect x="292" y="253" width="1" height="1" fill="#ff0000"/>
<rect x="295" y="253" width="1" height="1" fill="#ff0000"/>
<rect x="298" y="253" width="1" height="1" fill="#ff0000"/>
<rect x="301" y="253" width="1" height="1" fill="#ff0000"/>
<rect x="305" y="253" width="1" height="1" fill="#ff0000"/>
<rect x="308" y="253" width="1" height="1" fill="#ff0000"/>
<rect x="311" y="253" width="1" height="1" fill="#ff0000"/>
<rect x="314" y="253" width="1" height="1" fill="#0000ff"/>
<rect x="317" y="253" width="1" height="1" fill="#ff0000"/>
<rect x="321" y="253" width="1" height="1" fill="#ff0000"/>
<rect x="324" y="253" width="1" height="1" fill="#ff0000"/>
<rect x="327" y="253" width="1" height="1" fill="#ff0000"/>
<rect x="330" y="253" width="1" height="1" fill="#ff0000"/>
<rect x="333" y="253" width="1" height="1" fill="#ff0000"/>
<rect x="337" y="253" width="1" height="1" fill="#ff0000"/>
<rect x="340" y="253" width="1" height="1" fill="#ff0000"/>
<rect x="343" y="253" width="1" height="1" fill="#ff0000"/>
<rect x="346" y="253" width="1" height="1" fill="#ff0000"/>
<rect x="349" y="253" width="1" height="1" fill="#ff0000"/>
<rect x="353" y="253" width="1" height="1" fill="#ff0000"/>
<rect x="356" y="253" width="1" height="1" fill="#ff0000"/>
<rect x="359" y="253" width="1" height="1" fill="#ff0000"/>
<rect x="362" y="253" width="1" height="1" fill="#ff0000"/>
<rect x="365" y="253" width="1" height="1" fill="#ff0000"/>
<rect x="369" y="253" width="1" height="1" fill="#ff0000"/>
<rect x="372" y="253" width="1" height="1" fill="#ff0000"/>
<rect x="375" y="253" width="1" height="1" fill="#ff0000"/>
<rect x="378" y="253" width="1" height="1" fill="#ff0000"/>
<rect x="381" y="253" width="1" height="1" fill="#ff0000"/>
<rect x="385" y="253" width="1" height="1" fill="#ff0000"/>
<rect x="388" y="253" width="1" height="1" fill="#ff0000"/>
<rect x="391" y="253" width="1" height="1" fill="#ff0000"/>
<rect x="394" y="253" width="1" height="1" fill="#ff0000"/>
<rect x="397" y="253" width="1" height="1" fill="#ff0000"/>
<rect x="401" y="253" width="1" height="1" fill="#ff0000"/>
<rect x="404" y="253" width="1" height="1" fill="#ff0000"/>
<rect x="407" y="253" width="1" height="1" fill="#ff0000"/>
<rect x="410" y="253" width="1" height="1" fill="#ff0000"/>
<rect x="413" y="253" width="1" height="1" fill="#ff0000"/>
<rect x="417" y="253" width="1" height="1" fill="#ff0000"/>
<rect x="420" y="253" width="1" height="1" fill="#ff0000"/>
<rect x="423" y="253" width="1" height="1" fill="#ff0000"/>
<rect x="426" y="253" width="1" height="1" fill="#ff0000"/>
<rect x="429" y="253" width="1" height="1" fill="#ff0000"/>
<rect x="433" y="253" width="1" height="1" fill="#ff0000"/>
<rect x="436" y="253" width="1" height="1" fill="#ff0000"/>
<rect x="439" y="253" width="1" height="1" fill="#ff0000"/>
<rect x="442" y="253" width="1" height="1" fill="#ff0000"/>
<rect x="445" y="253" width="1" height="1" fill="#ff0000"/>
<rect x="449" y="253" width="1" height="1" fill="#ff0000"/>
<rect x="452" y="253" width="1" height="1" fill="#ff0000"/>
<rect x="455" y="253" width="1" height="1" fill="#ff0000"/>
<rect x="458" y="253" width="1" height="1" fill="#ff0000"/>
<rect x="461" y="253" width="1" height="1" fill="#ff0000"/>
<rect x="465" y="253" width="1" height="1" fill="#ff0000"/>
<rect x="468" y="253" width="1" height="1" fill="#ff0000"/>
<rect x="471" y="253" width="1" height="1" fill="#ff0000"/>
<rect x="474" y="253" width="1" height="1" fill="#ff0000"/>
<rect x="477" y="253" width="1" height="1" fill="#ff0000"/>
<rect x="481" y="253" width="1" height="1" fill="#ff0000"/>
<rect x="484" y="253" width="1" height="1" fill="#ff0000"/>
<rect x="487" y="253" width="1" height="1" fill="#ff0000"/>
<rect x="490" y="253" width="1" height="1" fill="#ff0000"/>
<rect x="493" y="253" width="1" height="1" fill="#ff0000"/>
<rect x="497" y="253" width="1" height="1" fill="#ff0000"/>
<rect x="500" y="253" width="1" height="1" fill="#ff0000"/>
<rect x="503" y="253" width="1" height="1" fill="#ff0000"/>
<rect x="506" y="253" width="1" height="1" fill="#ff0000"/>
<rect x="509" y="253" width="1" height="1" fill="#ff0000"/>
<rect x="513" y="253" width="1" height="1" fill="#ff0000"/>
<rect x="516" y="253" width="1" height="1" fill="#ff0000"/>
<rect x="519" y="253" width="1" height="1" fill="#ff0000"/>
<rect x="522" y="253" width="1" height="1" fill="#ff0000"/>
<rect x="525" y="253" width="1" height="1" fill="#ff0000"/>
<rect x="529" y="253" width="1" height="1" fill="#ff0000"/>
<rect x="532" y="253" width="1" height="1" fill="#ff0000"/>
<rect x="535" y="253" width="1" height="1" fill="#ff0000"/>
<rect x="538" y="253" width="1" height="1" fill="#ff0000"/>
<rect x="541" y="253" width="1" height="1" fill="#ff0000"/>
<rect x="545" y="253" width="1" height="1" fill="#ff0000"/>
<rect x="548" y="253" width="1" height="1" fill="#ff0000"/>
<rect x="551" y="253" width="1" height="1" fill="#ff0000"/>
<rect x="554" y="253" width="1" height="1" fill="#ff0000"/>
<rect x="557" y="253" width="1" height="1" fill="#ff0000"/>
<rect x="561" y="253" width="1" height="1" fill="#ff0000"/>
<rect x="564" y="253" width="1" height="1" fill="#ff0000"/>
<rect x="567" y="253" width="1" height="1" fill="#ff0000"/>
<rect x="570" y="253" width="1" height="1" fill="#ff0000"/>
<rect x="573" y="253" width="1" height="1" fill="#ff0000"/>
<rect x="577" y="253" width="1" height="1" fill="#ff0000"/>
<rect x="580" y="253" width="1" height="1" fill="#ff0000"/>
<rect x="583" y="253" width="1" height="1" fill="#ff0000"/>
<rect x="586" y="253" width="1" height="1" fill="#ff0000"/>
<rect x="589" y="253" width="1" height="1" fill="#ff0000"/>
<rect x="593" y="253" width="1" height="1" fill="#ff0000"/>
<rect x="596" y="253" width="1" height="1" fill="#ff0000"/>
<rect x="599" y="253" width="1" height="1" fill="#ff0000"/>
<rect x="602" y="253" width="1" height="1" fill="#ff0000"/>
<rect x="605" y="253" width="1" height="1" fill="#ff0000"/>
<rect x="609" y="253" width="1" height="1" fill="#ff0000"/>
<rect x="612" y="253" width="1" height="1" fill="#ff0000"/>
<rect x="615" y="253" width="1" height="1" fill="#ff0000"/>
<rect x="618" y="253" width="1" height="1" fill="#ff0000"/>
<rect x="621" y="253" width="1" height="1" fill="#ff0000"/>
<rect x="273" y="269" width="1" height="1" fill="#ff0000"/>
<rect x="278" y="269" width="1" height="1" fill="#ff0000"/>
<rect x="283" y="269" width="1" height="1" fill="#ff0000"/>
<rect x="289" y="269" width="1" height="1" fill="#ff0000"/>
<rect x="294" y="269" width="1" height="1" fill="#ff0000"/>
<rect x="299" y="269" width="1" height="1" fill="#ff0000"/>
<rect x="305" y="269" width="1" height="1" fill="#ff0000"/>
<rect x="310" y="269" width="1" height="1" fill="#ff00ff"/>
<rect x="315" y="269" width="1" height="1" fill="#ff0000"/>
<rect x="321" y="269" width="1" height="1" fill="#ff0000"/>
<rect x="326" y="269" width="1" height="1" fill="#ff0000"/>
<rect x="331" y="269" width="1" height="1" fill="#ff0000"/>
<rect x="337" y="269" width="1" height="1" fill="#ff0000"/>
<rect x="342" y="269" width="1" height="1" fill="#ff0000"/>
<rect x="347" y="269" width="1" height="1" fill="#ff0000"/>
<rect x="353" y="269" width="1" height="1" fill="#ff0000"/>
<rect x="358" y="269" width="1" height="1" fill="#ff0000"/>
<rect x="363" y="269" width="1" height="1" fill="#ff0000"/>
<rect x="369" y="269" width="1" height="1" fill="#ff0000"/>
<rect x="374" y="269" width="1" height="1" fill="#ff0000"/>
<rect x="379" y="269" width="1" height="1" fill="#ff0000"/>
<rect x="385" y="269" width="1" height="1" fill="#ff0000"/>
<rect x="390" y="269" width="1" height="1" fill="#ff0000"/>
<rect x="395" y="269" width="1" height="1" fill="#ff0000"/>
<rect x="401" y="269" width="1" height="1" fill="#ff0000"/>
<rect x="406" y="269" width="1" height="1" fill="#ff0000"/>
<rect x="411" y="269" width="1" height="1" fill="#ff0000"/>
<rect x="417" y="269" width="1" height="1" fill="#ff0000"/>
<rect x="422" y="269" width="1" height="1" fill="#ff0000"/>
<rect x="427" y="269" width="1" height="1" fill="#ff0000"/>
<rect x="433" y="269" width="1" height="1" fill="#ff0000"/>
<rect x="438" y="269" width="1" height="1" fill="#ff0000"/>
<rect x="443" y="269" width="1" height="1" fill="#ff0000"/>
<rect x="449" y="269" width="1" height="1" fill="#ff0000"/>
<rect x="454" y="269" width="1" height="1" fill="#ff0000"/>
<rect x="459" y="269" width="1" height="1" fill="#ff0000"/>
<rect x="465" y="269" width="1" height="1" fill="#ff0000"/>
<rect x="470" y="269" width="1" height="1" fill="#ff0000"/>
<rect x="475" y="269" width="1" height="1" fill="#ff0000"/>
<rect x="481" y="269" width="1" height="1" fill="#ff0000"/>
<rect x="486" y="269" width="1" height="1" fill="#ff0000"/>
<rect x="491" y="269" width="1" height="1" fill="#ff0000"/>
<rect x="497" y="269" width="1" height="1" fill="#ff0000"/>
<rect x="502" y="269" width="1" height="1" fill="#ff0000"/>
<rect x="507" y="269" width="1" height="1" fill="#ff0000"/>
<rect x="513" y="269" width="1" height="1" fill="#ff0000"/>
<rect x="518" y="269" width="1" height="1" fill="#ff0000"/>
<rect x="523" y="269" width="1" height="1" fill="#ff0000"/>
<rect x="529" y="269" width="1" height="1" fill="#ff0000"/>
<rect x="534" y="269" width="1" height="1" fill="#ff0000"/>
<rect x="539" y="269" width="1" height="1" fill="#ff0000"/>
<rect x="545" y="269" width="1" height="1" fill="#ff0000"/>
<rect x="550" y="269" width="1" height="1" fill="#ff0000"/>
<rect x="555" y="269" width="1" height="1" fill="#ff0000"/>
<rect x="561" y="269" width="1" height="1" fill="#ff0000"/>
<rect x="566" y="269" width="1" height="1" fill="#ff0000"/>
<rect x="571" y="269" width="1" height="1" fill="#ff0000"/>
<rect x="577" y="269" width="1" height="1" fill="#ff0000"/>
<rect x="582" y="269" width="1" height="1" fill="#ff0000"/>
<rect x="587" y="269" width="1" height="1" fill="#ff0000"/>
<rect x="593" y="269" width="1" height="1" fill="#ff0000"/>
<rect x="598" y="269" width="1" height="1" fill="#ff0000"/>
<rect x="603" y="269" width="1" height="1" fill="#ff0000"/>
<rect x="609" y="269" width="1" height="1" fill="#ff0000"/>
<rect x="614" y="269" width="1" height="1" fill="#ff0000"/>
<rect x="619" y="269" width="1" height="1" fill="#ff0000"/>
<rect x="273" y="285" width="1" height="1" fill="#ff0000"/>
<rect x="278" y="285" width="1" height="1" fill="#ff0000"/>
<rect x="283" y="285" width="1" height="1" fill="#ff0000"/>
<rect x="289" y="285" width="1" height="1" fill="#ff0000"/>
<rect x="294" y="285" width="1" height="1" fill="#ff0000"/>
<rect x="299" y="285" width="1" height="1" fill="#ff0000"/>
<rect x="305" y="285" width="1" height="1" fill="#ff0000"/>
<rect x="310" y="285" width="1" height="1" fill="#ff00ff"/>
<rect x="315" y="285" width="1" height="1" fill="#ff0000"/>
<rect x="321" y="285" width="1" height="1" fill="#ff0000"/>
<rect x="326" y="285" width="1" height="1" fill="#ff0000"/>
<rect x="331" y="285" width="1" height="1" fill="#ff0000"/>
<rect x="337" y="285" width="1" height="1" fill="#ff0000"/>
<rect x="342" y="285" width="1" height="1" fill="#ff0000"/>
<rect x="347" y="285" width="1" height="1" fill="#ff0000"/>
<rect x="353" y="285" width="1" height="1" fill="#ff0000"/>
<rect x="358" y="285" width="1" height="1" fill="#ff0000"/>
<rect x="363" y="285" width="1" height="1" fill="#ff0000"/>
<rect x="369" y="285" width="1" height="1" fill="#ff0000"/>
<rect x="374" y="285" width="1" height="1" fill="#ff0000"/>
<rect x="379" y="285" width="1" height="1" fill="#ff0000"/>
<rect x="385" y="285" width="1" height="1" fill="#ff0000"/>
<rect x="390" y="285" width="1" height="1" fill="#ff0000"/>
<rect x="395" y="285" width="1" height="1" fill="#ff0000"/>
<rect x="401" y="285" width="1" height="1" fill="#ff0000"/>
<rect x="406" y="285" width="1" height="1" fill="#ff0000"/>
<rect x="411" y="285" width="1" height="1" fill="#ff0000"/>
<rect x="417" y="285" width="1" height="1" fill="#ff0000"/>
<rect x="422" y="285" width="1" height="1" fill="#ff0000"/>
<rect x="427" y="285" width="1" height="1" fill="#ff0000"/>
<rect x="433" y="285" width="1" height="1" fill="#ff0000"/>
<rect x="438" y="285" width="1" height="1" fill="#ff0000"/>
<rect x="443" y="285" width="1" height="1" fill="#ff0000"/>
<rect x="449" y="285" width="1" height="1" fill="#ff0000"/>
<rect x="454" y="285" width="1" height="1" fill="#ff0000"/>
<rect x="459" y="285" width="1" height="1" fill="#ff0000"/>
<rect x="465" y="285" width="1" height="1" fill="#ff0000"/>
<rect x="470" y="285" width="1" height="1" fill="#ff0000"/>
<rect x="475" y="285" width="1" height="1" fill="#ff0000"/>
<rect x="481" y="285" width="1" height="1" fill="#ff0000"/>
<rect x="486" y="285" width="1" height="1" fill="#ff0000"/>
<rect x="491" y="285" width="1" height="1" fill="#ff0000"/>
<rect x="497" y="285" width="1" height="1" fill="#ff0000"/>
<rect x="502" y="285" width="1" height="1" fill="#ff0000"/>
<rect x="507" y="285" width="1" height="1" fill="#ff0000"/>
<rect x="513" y="285" width="1" height="1" fill="#ff0000"/>
<rect x="518" y="285" width="1" height="1" fill="#ff0000"/>
<rect x="523" y="285" width="1" height="1" fill="#ff0000"/>
<rect x="529" y="285" width="1" height="1" fill="#ff0000"/>
<rect x="534" y="285" width="1" height="1" fill="#ff0000"/>
<rect x="539" y="285" width="1" height="1" fill="#ff0000"/>
<rect x="545" y="285" width="1" height="1" fill="#ff0000"/>
<rect x="550" y="285" width="1" height="1" fill="#ff0000"/>
<rect x="555" y="285" width="1" height="1" fill="#ff0000"/>
<rect x="561" y="285" width="1" height="1" fill="#ff0000"/>
<rect x="566" y="285" width="1" height="1" fill="#ff0000"/>
<rect x="571" y="285" width="1" height="1" fill="#ff0000"/>
<rect x="577" y="285" width="1" height="1" fill="#ff0000"/>
<rect x="582" y="285" width="1" height="1" fill="#ff0000"/>
<rect x="587" y="285" width="1" height="1" fill="#ff0000"/>
<rect x="593" y="285" width="1" height="1" fill="#ff0000"/>
<rect x="598" y="285" width="1" height="1" fill="#ff0000"/>
<rect x="603" y="285" width="1" height="1" fill="#ff0000"/>
<rect x="609" y="285" width="1" height="1" fill="#ff0000"/>
<rect x="614" y="285" width="1" height="1" fill="#ff0000"/>
<rect x="619" y="285" width="1" height="1" fill="#ff0000"/>
<rect x="273" y="301" width="1" height="1" fill="#ff0000"/>
<rect x="278" y="301" width="1" height="1" fill="#ff0000"/>
<rect x="283" y="301" width="1" height="1" fill="#ff0000"/>
<rect x="289" y="301" width="1" height="1" fill="#ff0000"/>
<rect x="294" y="301" width="1" height="1" fill="#ff0000"/>
<rect x="299" y="301" width="1" height="1" fill="#ff0000"/>
<rect x="305" y="301" width="1" height="1" fill="#ff0000"/>
<rect x="310" y="301" width="1" height="1" fill="#ff00ff"/>
<rect x="315" y="301" width="1" height="1" fill="#ff0000"/>
<rect x="321" y="301" width="1" height="1" fill="#ff0000"/>
<rect x="326" y="301" width="1" height="1" fill="#ff0000"/>
<rect x="331" y="301" width="1" height="1" fill="#ff0000"/>
<rect x="337" y="301" width="1" height="1" fill="#ff0000"/>
<rect x="342" y="301" width="1" height="1" fill="#ff0000"/>
<rect x="347" y="301" width="1" height="1" fill="#ff0000"/>
<rect x="353" y="301" width="1" height="1" fill="#ff0000"/>
<rect x="358" y="301" width="1" height="1" fill="#ff0000"/>
<rect x="363" y="301" width="1" height="1" fill="#ff0000"/>
<rect x="369" y="301" width="1" height="1" fill="#ff0000"/>
<rect x="374" y="301" width="1" height="1" fill="#ff0000"/>
<rect x="379" y="301" width="1" height="1" fill="#ff0000"/>
<rect x="385" y="301" width="1" height="1" fill="#ff0000"/>
<rect x="390" y="301" width="1" height="1" fill="#ff0000"/>
<rect x="395" y="301" width="1" height="1" fill="#ff0000"/>
<rect x="401" y="301" width="1" height="1" fill="#ff0000"/>
<rect x="406" y="301" width="1" height="1" fill="#ff0000"/>
<rect x="411" y="301" width="1" height="1" fill="#ff0000"/>
<rect x="417" y="301" width="1" height="1" fill="#ff0000"/>
<rect x="422" y="301" width="1" height="1" fill="#ff0000"/>
<rect x="427" y="301" width="1" height="1" fill="#ff0000"/>
<rect x="433" y="301" width="1" height="1" fill="#ff0000"/>
<rect x="438" y="301" width="1" height="1" fill="#ff0000"/>
<rect x="443" y="301" width="1" height="1" fill="#ff0000"/>
<rect x="449" y="301" width="1" height="1" fill="#ff0000"/>
<rect x="454" y="301" width="1" height="1" fill="#ff0000"/>
<rect x="459" y="301" width="1" height="1" fill="#ff0000"/>
<rect x="465" y="301" width="1" height="1" fill="#ff0000"/>
<rect x="470" y="301" width="1" height="1" fill="#ff0000"/>
<rect x="475" y="301" width="1" height="1" fill="#ff0000"/>
<rect x="481" y="301" width="1" height="1" fill="#ff0000"/>
<rect x="486" y="301" width="1" height="1" fill="#ff0000"/>
<rect x="491" y="301" width="1" height="1" fill="#ff0000"/>
<rect x="497" y="301" width="1" height="1" fill="#ff0000"/>
<rect x="502" y="301" width="1" height="1" fill="#ff0000"/>
<rect x="507" y="301" width="1" height="1" fill="#ff0000"/>
<rect x="513" y="301" width="1" height="1" fill="#ff0000"/>
<rect x="518" y="301" width="1" height="1" fill="#ff0000"/>
<rect x="523" y="301" width="1" height="1" fill="#ff0000"/>
<rect x="529" y="301" width="1" height="1" fill="#ff0000"/>
<rect x="534" y="301" width="1" height="1" fill="#ff0000"/>
<rect x="539" y="301" width="1" height="1" fill="#ff0000"/>
<rect x="545" y="301" width="1" height="1" fill="#ff0000"/>
<rect x="550" y="301" width="1" height="1" fill="#ff0000"/>
<rect x="555" y="301" width="1" height="1" fill="#ff0000"/>
<rect x="561" y="301" width="1" height="1" fill="#ff0000"/>
<rect x="566" y="301" width="1" height="1" fill="#ff0000"/>
<rect x="571" y="301" width="1" height="1" fill="#ff0000"/>
<rect x="577" y="301" width="1" height="1" fill="#ff0000"/>
<rect x="582" y="301" width="1" height="1" fill="#ff0000"/>
<rect x="587" y="301" width="1" height="1" fill="#ff0000"/>
<rect x="593" y="301" width="1" height="1" fill="#ff0000"/>
<rect x="598" y="301" width="1" height="1" fill="#ff0000"/>
<rect x="603" y="301" width="1" height="1" fill="#ff0000"/>
<rect x="609" y="301" width="1" height="1" fill="#ff0000"/>
<rect x="614" y="301" width="1" height="1" fill="#ff0000"/>
<rect x="619" y="301" width="1" height="1" fill="#ff0000"/>
<rect x="273" y="317" width="1" height="1" fill="#ff0000"/>
<rect x="278" y="317" width="1" height="1" fill="#ff0000"/>
<rect x="283" y="317" width="1" height="1" fill="#ff0000"/>
<rect x="289" y="317" width="1" height="1" fill="#ff0000"/>
<rect x="294" y="317" width="1" height="1" fill="#ff0000"/>
<rect x="299" y="317" width="1" height="1" fill="#ff0000"/>
<rect x="305" y="317" width="1" height="1" fill="#ff0000"/>
<rect x="310" y="317" width="1" height="1" fill="#ff00ff"/>
<rect x="315" y="317" width="1" height="1" fill="#ff0000"/>
<rect x="321" y="317" width="1" height="1" fill="#ff0000"/>
<rect x="326" y="317" width="1" height="1" fill="#ff0000"/>
<rect x="331" y="317" width="1" height="1" fill="#ff0000"/>
<rect x="337" y="317" width="1" height="1" fill="#ff00ff"/>
<rect x="342" y="317" width="1" height="1" fill="#000"/>
<rect x="347" y="317" width="1" height="1" fill="#0000ff"/>
<rect x="353" y="317" width="1" height="1" fill="#ff0000"/>
<rect x="358" y="317" width="1" height="1" fill="#ff0000"/>
<rect x="363" y="317" width="1" height="1" fill="#ff0000"/>
<rect x="369" y="317" width="1" height="1" fill="#ff0000"/>
<rect x="374" y="317" width="1" height="1" fill="#ff0000"/>
<rect x="379" y="317" width="1" height="1" fill="#ff0000"/>
<rect x="385" y="317" width="1" height="1" fill="#ff0000"/>
<rect x="390" y="317" width="1" height="1" fill="#ff0000"/>
<rect x="395" y="317" width="1" height="1" fill="#ff0000"/>
<rect x="401" y="317" width="1" height="1" fill="#ff0000"/>
<rect x="406" y="317" width="1" height="1" fill="#ff0000"/>
<rect x="411" y="317" width="1" height="1" fill="#ff0000"/>
<rect x="417" y="317" width="1" height="1" fill="#ff0000"/>
<rect x="422" y="317" width="1" height="1" fill="#ff0000"/>
<rect x="427" y="317" width="1" height="1" fill="#ff0000"/>
<rect x="433" y="317" width="1" height="1" fill="#ff0000"/>
<rect x="438" y="317" width="1" height="1" fill="#ff0000"/>
<rect x="443" y="317" width="1" height="1" fill="#ff00ff"/>
<rect x="449" y="317" width="1" height="1" fill="#ff00ff"/>
<rect x="454" y="317" width="1" height="1" fill="#ff0000"/>
<rect x="459" y="317" width="1" height="1" fill="#ff0000"/>
<rect x="465" y="317" width="1" height="1" fill="#ff0000"/>
<rect x="470" y="317" width="1" height="1" fill="#ff0000"/>
<rect x="475" y="317" width="1" height="1" fill="#ff0000"/>
<rect x="481" y="317" width="1" height="1" fill="#ff0000"/>
<rect x="486" y="317" width="1" height="1" fill="#ff0000"/>
<rect x="491" y="317" width="1" height="1" fill="#ff0000"/>
<rect x="497" y="317" width="1" height="1" fill="#ff0000"/>
<rect x="502" y="317" width="1" height="1" fill="#ff0000"/>
<rect x="507" y="317" width="1" height="1" fill="#ff0000"/>
<rect x="513" y="317" width="1" height="1" fill="#ff0000"/>
<rect x="518" y="317" width="1" height="1" fill="#ff0000"/>
<rect x="523" y="317" width="1" height="1" fill="#ff0000"/>
<rect x="529" y="317" width="1" height="1" fill="#ff0000"/>
<rect x="534" y="317" width="1" height="1" fill="#ff0000"/>
<rect x="539" y="317" width="1" height="1" fill="#ff0000"/>
<rect x="545" y="317" width="1" height="1" fill="#ff0000"/>
<rect x="550" y="317" width="1" height="1" fill="#ff0000"/>
<rect x="555" y="317" width="1" height="1" fill="#ff0000"/>
<rect x="561" y="317" width="1" height="1" fill="#ff0000"/>
<rect x="566" y="317" width="1" height="1" fill="#ff0000"/>
<rect x="571" y="317" width="1" height="1" fill="#ff0000"/>
<rect x="577" y="317" width="1" height="1" fill="#ff0000"/>
<rect x="582" y="317" width="1" height="1" fill="#ff0000"/>
<rect x="587" y="317" width="1" height="1" fill="#ff0000"/>
<rect x="593" y="317" width="1" height="1" fill="#ff0000"/>
<rect x="598" y="317" width="1" height="1" fill="#ff0000"/>
<rect x="603" y="317" width="1" height="1" fill="#ff0000"/>
<rect x="609" y="317" width="1" height="1" fill="#ff0000"/>
<rect x="614" y="317" width="1" height="1" fill="#ff0000"/>
<rect x="619" y="317" width="1" height="1" fill="#ff0000"/>
<rect x="273" y="333" width="1" height="1" fill="#ff0000"/>
<rect x="276" y="333" width="1" height="1" fill="#ff0000"/>
<rect x="279" y="333" width="1" height="1" fill="#ff0000"/>
<rect x="282" y="333" width="1" height="1" fill="#ff0000"/>
<rect x="285" y="333" width="1" height="1" fill="#ff0000"/>
<rect x="289" y="333" width="1" height="1" fill="#ff0000"/>
<rect x="292" y="333" width="1" height="1" fill="#ff0000"/>
<rect x="295" y="333" width="1" height="1" fill="#ff0000"/>
<rect x="298" y="333" width="1" height="1" fill="#ff0000"/>
<rect x="301" y="333" width="1" height="1" fill="#ff0000"/>
<rect x="305" y="333" width="1" height="1" fill="#ff0000"/>
<rect x="308" y="333" width="1" height="1" fill="#ff0000"/>
<rect x="311" y="333" width="1" height="1" fill="#ff0000"/>
<rect x="314" y="333" width="1" height="1" fill="#0000ff"/>
<rect x="317" y="333" width="1" height="1" fill="#ff0000"/>
<rect x="321" y="333" width="1" height="1" fill="#ff0000"/>
<rect x="324" y="333" width="1" height="1" fill="#ff0000"/>
<rect x="327" y="333" width="1" height="1" fill="#ff0000"/>
<rect x="330" y="333" width="1" height="1" fill="#ff0000"/>
<rect x="333" y="333" width="1" height="1" fill="#ff0000"/>
<rect x="337" y="333" width="1" height="1" fill="#ff00ff"/>
<rect x="340" y="333" width="1" height="1" fill="#000"/>
<rect x="343" y="333" width="1" height="1" fill="#000"/>
<rect x="346" y="333" width="1" height="1" fill="#0000ff"/>
<rect x="349" y="333" width="1" height="1" fill="#0000ff"/>
<rect x="353" y="333" width="1" height="1" fill="#ff0000"/>
<rect x="356" y="333" width="1" height="1" fill="#ff0000"/>
<rect x="359" y="333" width="1" height="1" fill="#ff0000"/>
<rect x="362" y="333" width="1" height="1" fill="#ff0000"/>
<rect x="365" y="333" width="1" height="1" fill="#ff0000"/>
<rect x="369" y="333" width="1" height="1" fill="#ff0000"/>
<rect x="372" y="333" width="1" height="1" fill="#ff00ff"/>
<rect x="375" y="333" width="1" height="1" fill="#000"/>
<rect x="378" y="333" width="1" height="1" fill="#000"/>
<rect x="381" y="333" width="1" height="1" fill="#0000ff"/>
<rect x="385" y="333" width="1" height="1" fill="#ff0000"/>
<rect x="388" y="333" width="1" height="1" fill="#ff0000"/>
<rect x="391" y="333" width="1" height="1" fill="#ff0000"/>
<rect x="394" y="333" width="1" height="1" fill="#ff0000"/>
<rect x="397" y="333" width="1" height="1" fill="#ff0000"/>
<rect x="401" y="333" width="1" height="1" fill="#ff0000"/>
<rect x="404" y="333" width="1" height="1" fill="#ff0000"/>
<rect x="407" y="333" width="1" height="1" fill="#ff0000"/>
<rect x="410" y="333" width="1" height="1" fill="#ff0000"/>
<rect x="413" y="333" width="1" height="1" fill="#ff0000"/>
<rect x="417" y="333" width="1" height="1" fill="#ff0000"/>
<rect x="420" y="333" width="1" height="1" fill="#ff0000"/>
<rect x="423" y="333" width="1" height="1" fill="#ff0000"/>
<rect x="426" y="333" width="1" height="1" fill="#ff0000"/>
<rect x="429" y="333" width="1" height="1" fill="#ff0000"/>
<rect x="433" y="333" width="1" height="1" fill="#ff0000"/>
<rect x="436" y="333" width="1" height="1" fill="#ff0000"/>
<rect x="439" y="333" width="1" height="1" fill="#ff0000"/>
<rect x="442" y="333" width="1" height="1" fill="#ff00ff"/>
<rect x="445" y="333" width="1" height="1" fill="#000"/>
<rect x="449" y="333" width="1" height="1" fill="#000"/>
<rect x="452" y="333" width="1" height="1" fill="#0000ff"/>
<rect x="455" y="333" width="1" height="1" fill="#0000ff"/>
<rect x="458" y="333" width="1" height="1" fill="#ff0000"/>
<rect x="461" y="333" width="1" height="1" fill="#ff0000"/>
<rect x="465" y="333" width="1" height="1" fill="#ff0000"/>
<rect x="468" y="333" width="1" height="1" fill="#ff0000"/>
<rect x="471" y="333" width="1" height="1" fill="#ff0000"/>
<rect x="474" y="333" width="1" height="1" fill="#ff0000"/>
<rect x="477" y="333" width="1" height="1" fill="#ff0000"/>
<rect x="481" y="333" width="1" height="1" fill="#ff0000"/>
<rect x="484" y="333" width="1" height="1" fill="#ff0000"/>
<rect x="487" y="333" width="1" height="1" fill="#ff0000"/>
<rect x="490" y="333" width="1" height="1" fill="#ff0000"/>
<rect x="493" y="333" width="1" height="1" fill="#ff0000"/>
<rect x="497" y="333" width="1" height="1" fill="#ff0000"/>
<rect x="500" y="333" width="1" height="1" fill="#ff0000"/>
<rect x="503" y="333" width="1" height="1" fill="#ff0000"/>
<rect x="506" y="333" width="1" height="1" fill="#ff0000"/>
<rect x="509" y="333" width="1" height="1" fill="#ff0000"/>
<rect x="513" y="333" width="1" height="1" fill="#ff0000"/>
<rect x="516" y="333" width="1" height="1" fill="#ff0000"/>
<rect x="519" y="333" width="1" height="1" fill="#ff0000"/>
<rect x="522" y="333" width="1" height="1" fill="#ff0000"/>
<rect x="525" y="333" width="1" height="1" fill="#ff0000"/>
<rect x="529" y="333" width="1" height="1" fill="#ff0000"/>
<rect x="532" y="333" width="1" height="1" fill="#ff0000"/>
<rect x="535" y="333" width="1" height="1" fill="#ff0000"/>
<rect x="538" y="333" width="1" height="1" fill="#ff0000"/>
<rect x="541" y="333" width="1" height="1" fill="#ff0000"/>
<rect x="545" y="333" width="1" height="1" fill="#ff0000"/>
<rect x="548" y="333" width="1" height="1" fill="#ff0000"/>
<rect x="551" y="333" width="1" height="1" fill="#ff0000"/>
<rect x="554" y="333" width="1" height="1" fill="#ff0000"/>
<rect x="557" y="333" width="1" height="1" fill="#ff0000"/>
<rect x="561" y="333" width="1" height="1" fill="#ff0000"/>
<rect x="564" y="333" width="1" height="1" fill="#ff0000"/>
<rect x="567" y="333" width="1" height="1" fill="#ff0000"/>
<rect x="570" y="333" width="1" height="1" fill="#ff0000"/>
<rect x="573" y="333" width="1" height="1" fill="#ff0000"/>
<rect x="577" y="333" width="1" height="1" fill="#ff0000"/>
<rect x="580" y="333" width="1" height="1" fill="#ff0000"/>
<rect x="583" y="333" width="1" height="1" fill="#ff00ff"/>
<rect x="586" y="333" width="1" height="1" fill="#000"/>
<rect x="589" y="333" width="1" height="1" fill="#000"/>
<rect x="593" y="333" width="1" height="1" fill="#0000ff"/>
<rect x="596" y="333" width="1" height="1" fill="#ff0000"/>
<rect x="599" y="333" width="1" height="1" fill="#ff0000"/>
<rect x="602" y="333" width="1" height="1" fill="#ff0000"/>
<rect x="605" y="333" width="1" height="1" fill="#ff0000"/>
<rect x="609" y="333" width="1" height="1" fill="#ff0000"/>
<rect x="612" y="333" width="1" height="1" fill="#ff0000"/>
<rect x="615" y="333" width="1" height="1" fill="#ff0000"/>
<rect x="618" y="333" width="1" height="1" fill="#ff0000"/>
<rect x="621" y="333" width="1" height="1" fill="#ff0000"/>
<rect x="273" y="349" width="1" height="1" fill="#ff0000"/>
<rect x="278" y="349" width="1" height="1" fill="#ff0000"/>
<rect x="283" y="349" width="1" height="1" fill="#ff0000"/>
<rect x="289" y="349" width="1" height="1" fill="#ff0000"/>
<rect x="294" y="349" width="1" height="1" fill="#ff0000"/>
<rect x="299" y="349" width="1" height="1" fill="#ff0000"/>
<rect x="305" y="349" width="1" height="1" fill="#ff0000"/>
<rect x="310" y="349" width="1" height="1" fill="#ff00ff"/>
<rect x="315" y="349" width="1" height="1" fill="#ff0000"/>
<rect x="321" y="349" width="1" height="1" fill="#ff0000"/>
<rect x="326" y="349" width="1" height="1" fill="#ff0000"/>
<rect x="331" y="349" width="1" height="1" fill="#ff0000"/>
<rect x="337" y="349" width="1" height="1" fill="#ff00ff"/>
<rect x="342" y="349" width="1" height="1" fill="#000"/>
<rect x="347" y="349" width="1" height="1" fill="#0000ff"/>
<rect x="353" y="349" width="1" height="1" fill="#ff0000"/>
<rect x="358" y="349" width="1" height="1" fill="#ff0000"/>
<rect x="363" y="349" width="1" height="1" fill="#ff0000"/>
<rect x="369" y="349" width="1" height="1" fill="#ff0000"/>
<rect x="374" y="349" width="1" height="1" fill="#000"/>
<rect x="379" y="349" width="1" height="1" fill="#000"/>
<rect x="385" y="349" width="1" height="1" fill="#ff0000"/>
<rect x="390" y="349" width="1" height="1" fill="#ff0000"/>
<rect x="395" y="349" width="1" height="1" fill="#ff0000"/>
<rect x="401" y="349" width="1" height="1" fill="#ff0000"/>
<rect x="406" y="349" width="1" height="1" fill="#ff00ff"/>
<rect x="411" y="349" width="1" height="1" fill="#000"/>
<rect x="417" y="349" width="1" height="1" fill="#0000ff"/>
<rect x="422" y="349" width="1" height="1" fill="#ff0000"/>
<rect x="427" y="349" width="1" height="1" fill="#ff0000"/>
<rect x="433" y="349" width="1" height="1" fill="#ff0000"/>
<rect x="438" y="349" width="1" height="1" fill="#ff0000"/>
<rect x="443" y="349" width="1" height="1" fill="#ff00ff"/>
<rect x="449" y="349" width="1" height="1" fill="#000"/>
<rect x="454" y="349" width="1" height="1" fill="#0000ff"/>
<rect x="459" y="349" width="1" height="1" fill="#ff0000"/>
<rect x="465" y="349" width="1" height="1" fill="#ff0000"/>
<rect x="470" y="349" width="1" height="1" fill="#ff0000"/>
<rect x="475" y="349" width="1" height="1" fill="#ff0000"/>
<rect x="481" y="349" width="1" height="1" fill="#ff0000"/>
<rect x="486" y="349" width="1" height="1" fill="#ff0000"/>
<rect x="491" y="349" width="1" height="1" fill="#ff0000"/>
<rect x="497" y="349" width="1" height="1" fill="#ff0000"/>
<rect x="502" y="349" width="1" height="1" fill="#ff0000"/>
<rect x="507" y="349" width="1" height="1" fill="#ff0000"/>
<rect x="513" y="349" width="1" height="1" fill="#ff00ff"/>
<rect x="518" y="349" width="1" height="1" fill="#000"/>
<rect x="523" y="349" width="1" height="1" fill="#0000ff"/>
<rect x="529" y="349" width="1" height="1" fill="#ff0000"/>
<rect x="534" y="349" width="1" height="1" fill="#ff0000"/>
<rect x="539" y="349" width="1" height="1" fill="#ff0000"/>
<rect x="545" y="349" width="1" height="1" fill="#ff0000"/>
<rect x="550" y="349" width="1" height="1" fill="#ff0000"/>
<rect x="555" y="349" width="1" height="1" fill="#ff0000"/>
<rect x="561" y="349" width="1" height="1" fill="#ff0000"/>
<rect x="566" y="349" width="1" height="1" fill="#ff0000"/>
<rect x="571" y="349" width="1" height="1" fill="#ff0000"/>
<rect x="577" y="349" width="1" height="1" fill="#ff0000"/>
<rect x="582" y="349" width="1" height="1" fill="#ff00ff"/>
<rect x="587" y="349" width="1" height="1" fill="#000"/>
<rect x="593" y="349" width="1" height="1" fill="#0000ff"/>
<rect x="598" y="349" width="1" height="1" fill="#ff0000"/>
<rect x="603" y="349" width="1" height="1" fill="#ff0000"/>
<rect x="609" y="349" width="1" height="1" fill="#ff0000"/>
<rect x="614" y="349" width="1" height="1" fill="#ff0000"/>
<rect x="619" y="349" width="1" height="1" fill="#ff0000"/>
<rect x="273" y="365" width="1" height="1" fill="#ff0000"/>
<rect x="278" y="365" width="1" height="1" fill="#ff0000"/>
<rect x="283" y="365" width="1" height="1" fill="#ff0000"/>
<rect x="289" y="365" width="1" height="1" fill="#ff0000"/>
<rect x="294" y="365" width="1" height="1" fill="#ff0000"/>
<rect x="299" y="365" width="1" height="1" fill="#ff0000"/>
<rect x="305" y="365" width="1" height="1" fill="#ff0000"/>
<rect x="310" y="365" width="1" height="1" fill="#ff00ff"/>
<rect x="315" y="365" width="1" height="1" fill="#ff0000"/>
<rect x="321" y="365" width="1" height="1" fill="#ff0000"/>
<rect x="326" y="365" width="1" height="1" fill="#ff0000"/>
<rect x="331" y="365" width="1" height="1" fill="#ff0000"/>
<rect x="337" y="365" width="1" height="1" fill="#ff00ff"/>
<rect x="342" y="365" width="1" height="1" fill="#000"/>
<rect x="347" y="365" width="1" height="1" fill="#0000ff"/>
<rect x="353" y="365" width="1" height="1" fill="#ff0000"/>
<rect x="358" y="365" width="1" height="1" fill="#ff0000"/>
<rect x="363" y="365" width="1" height="1" fill="#ff0000"/>
<rect x="369" y="365" width="1" height="1" fill="#ff0000"/>
<rect x="374" y="365" width="1" height="1" fill="#000"/>
<rect x="379" y="365" width="1" height="1" fill="#000"/>
<rect x="385" y="365" width="1" height="1" fill="#ff0000"/>
<rect x="390" y="365" width="1" height="1" fill="#ff0000"/>
<rect x="395" y="365" width="1" height="1" fill="#ff0000"/>
<rect x="401" y="365" width="1" height="1" fill="#ff0000"/>
<rect x="406" y="365" width="1" height="1" fill="#ff00ff"/>
<rect x="411" y="365" width="1" height="1" fill="#000"/>
<rect x="417" y="365" width="1" height="1" fill="#0000ff"/>
<rect x="422" y="365" width="1" height="1" fill="#ff0000"/>
<rect x="427" y="365" width="1" height="1" fill="#ff0000"/>
<rect x="433" y="365" width="1" height="1" fill="#ff0000"/>
<rect x="438" y="365" width="1" height="1" fill="#ff0000"/>
<rect x="443" y="365" width="1" height="1" fill="#ff00ff"/>
<rect x="449" y="365" width="1" height="1" fill="#000"/>
<rect x="454" y="365" width="1" height="1" fill="#0000ff"/>
<rect x="459" y="365" width="1" height="1" fill="#ff0000"/>
<rect x="465" y="365" width="1" height="1" fill="#ff0000"/>
<rect x="470" y="365" width="1" height="1" fill="#ff0000"/>
<rect x="475" y="365" width="1" height="1" fill="#ff0000"/>
<rect x="481" y="365" width="1" height="1" fill="#0000ff"/>
<rect x="486" y="365" width="1" height="1" fill="#0000ff"/>
<rect x="491" y="365" width="1" height="1" fill="#ff0000"/>
<rect x="497" y="365" width="1" height="1" fill="#ff0000"/>
<rect x="502" y="365" width="1" height="1" fill="#ff0000"/>
<rect x="507" y="365" width="1" height="1" fill="#ff0000"/>
<rect x="513" y="365" width="1" height="1" fill="#ff00ff"/>
<rect x="518" y="365" width="1" height="1" fill="#000"/>
<rect x="523" y="365" width="1" height="1" fill="#0000ff"/>
<rect x="529" y="365" width="1" height="1" fill="#ff0000"/>
<rect x="534" y="365" width="1" height="1" fill="#ff0000"/>
<rect x="539" y="365" width="1" height="1" fill="#ff0000"/>
<rect x="545" y="365" width="1" height="1" fill="#ff0000"/>
<rect x="550" y="365" width="1" height="1" fill="#000"/>
<rect x="555" y="365" width="1" height="1" fill="#000"/>
<rect x="561" y="365" width="1" height="1" fill="#ff0000"/>
<rect x="566" y="365" width="1" height="1" fill="#ff0000"/>
<rect x="571" y="365" width="1" height="1" fill="#ff0000"/>
<rect x="577" y="365" width="1" height="1" fill="#ff0000"/>
<rect x="582" y="365" width="1" height="1" fill="#ff00ff"/>
<rect x="587" y="365" width="1" height="1" fill="#000"/>
<rect x="593" y="365" width="1" height="1" fill="#0000ff"/>
<rect x="598" y="365" width="1" height="1" fill="#ff0000"/>
<rect x="603" y="365" width="1" height="1" fill="#ff0000"/>
<rect x="609" y="365" width="1" height="1" fill="#ff0000"/>
<rect x="614" y="365" width="1" height="1" fill="#ff0000"/>
<rect x="619" y="365" width="1" height="1" fill="#ff0000"/>
<rect x="273" y="381" width="1" height="1" fill="#ff0000"/>
<rect x="278" y="381" width="1" height="1" fill="#ff0000"/>
<rect x="283" y="381" width="1" height="1" fill="#ff0000"/>
<rect x="289" y="381" width="1" height="1" fill="#ff0000"/>
<rect x="294" y="381" width="1" height="1" fill="#ff0000"/>
<rect x="299" y="381" width="1" height="1" fill="#ff0000"/>
<rect x="305" y="381" width="1" height="1" fill="#ff0000"/>
<rect x="310" y="381" width="1" height="1" fill="#ff00ff"/>
<rect x="315" y="381" width="1" height="1" fill="#ff0000"/>
<rect x="321" y="381" width="1" height="1" fill="#ff0000"/>
<rect x="326" y="381" width="1" height="1" fill="#ff0000"/>
<rect x="331" y="381" width="1" height="1" fill="#ff0000"/>
<rect x="337" y="381" width="1" height="1" fill="#ff00ff"/>
<rect x="342" y="381" width="1" height="1" fill="#000"/>
<rect x="347" y="381" width="1" height="1" fill="#0000ff"/>
<rect x="353" y="381" width="1" height="1" fill="#ff0000"/>
<rect x="358" y="381" width="1" height="1" fill="#ff0000"/>
<rect x="363" y="381" width="1" height="1" fill="#ff0000"/>
<rect x="369" y="381" width="1" height="1" fill="#ff0000"/>
<rect x="374" y="381" width="1" height="1" fill="#000"/>
<rect x="379" y="381" width="1" height="1" fill="#000"/>
<rect x="385" y="381" width="1" height="1" fill="#ff0000"/>
<rect x="390" y="381" width="1" height="1" fill="#ff0000"/>
<rect x="395" y="381" width="1" height="1" fill="#ff0000"/>
<rect x="401" y="381" width="1" height="1" fill="#ff0000"/>
<rect x="406" y="381" width="1" height="1" fill="#ff00ff"/>
<rect x="411" y="381" width="1" height="1" fill="#000"/>
<rect x="417" y="381" width="1" height="1" fill="#0000ff"/>
<rect x="422" y="381" width="1" height="1" fill="#ff0000"/>
<rect x="427" y="381" width="1" height="1" fill="#ff0000"/>
<rect x="433" y="381" width="1" height="1" fill="#ff0000"/>
<rect x="438" y="381" width="1" height="1" fill="#ff0000"/>
<rect x="443" y="381" width="1" height="1" fill="#ff00ff"/>
<rect x="449" y="381" width="1" height="1" fill="#000"/>
<rect x="454" y="381" width="1" height="1" fill="#0000ff"/>
<rect x="459" y="381" width="1" height="1" fill="#ff0000"/>
<rect x="465" y="381" width="1" height="1" fill="#ff0000"/>
<rect x="470" y="381" width="1" height="1" fill="#ff0000"/>
<rect x="475" y="381" width="1" height="1" fill="#ff0000"/>
<rect x="481" y="381" width="1" height="1" fill="#000"/>
<rect x="486" y="381" width="1" height="1" fill="#000"/>
<rect x="491" y="381" width="1" height="1" fill="#ff0000"/>
<rect x="497" y="381" width="1" height="1" fill="#ff0000"/>
<rect x="502" y="381" width="1" height="1" fill="#ff0000"/>
<rect x="507" y="381" width="1" height="1" fill="#ff0000"/>
<rect x="513" y="381" width="1" height="1" fill="#ff00ff"/>
<rect x="518" y="381" width="1" height="1" fill="#000"/>
<rect x="523" y="381" width="1" height="1" fill="#0000ff"/>
<rect x="529" y="381" width="1" height="1" fill="#ff0000"/>
<rect x="534" y="381" width="1" height="1" fill="#ff0000"/>
<rect x="539" y="381" width="1" height="1" fill="#ff0000"/>
<rect x="545" y="381" width="1" height="1" fill="#ff0000"/>
<rect x="550" y="381" width="1" height="1" fill="#000"/>
<rect x="555" y="381" width="1" height="1" fill="#000"/>
<rect x="561" y="381" width="1" height="1" fill="#ff0000"/>
<rect x="566" y="381" width="1" height="1" fill="#ff0000"/>
<rect x="571" y="381" width="1" height="1" fill="#ff0000"/>
<rect x="577" y="381" width="1" height="1" fill="#ff0000"/>
<rect x="582" y="381" width="1" height="1" fill="#ff00ff"/>
<rect x="587" y="381" width="1" height="1" fill="#000"/>
<rect x="593" y="381" width="1" height="1" fill="#0000ff"/>
<rect x="598" y="381" width="1" height="1" fill="#ff0000"/>
<rect x="603" y="381" width="1" height="1" fill="#ff0000"/>
<rect x="609" y="381" width="1" height="1" fill="#ff0000"/>
<rect x="614" y="381" width="1" height="1" fill="#ff0000"/>
<rect x="619" y="381" width="1" height="1" fill="#ff0000"/>
<rect x="273" y="397" width="1" height="1" fill="#ff0000"/>
<rect x="278" y="397" width="1" height="1" fill="#ff0000"/>
<rect x="283" y="397" width="1" height="1" fill="#ff0000"/>
<rect x="289" y="397" width="1" height="1" fill="#ff0000"/>
<rect x="294" y="397" width="1" height="1" fill="#ff0000"/>
<rect x="299" y="397" width="1" height="1" fill="#ff0000"/>
<rect x="305" y="397" width="1" height="1" fill="#ff0000"/>
<rect x="310" y="397" width="1" height="1" fill="#ff00ff"/>
<rect x="315" y="397" width="1" height="1" fill="#ff0000"/>
<rect x="321" y="397" width="1" height="1" fill="#ff0000"/>
<rect x="326" y="397" width="1" height="1" fill="#ff0000"/>
<rect x="331" y="397" width="1" height="1" fill="#ff0000"/>
<rect x="337" y="397" width="1" height="1" fill="#ff00ff"/>
<rect x="342" y="397" width="1" height="1" fill="#000"/>
<rect x="347" y="397" width="1" height="1" fill="#0000ff"/>
<rect x="353" y="397" width="1" height="1" fill="#ff0000"/>
<rect x="358" y="397" width="1" height="1" fill="#ff0000"/>
<rect x="363" y="397" width="1" height="1" fill="#ff0000"/>
<rect x="369" y="397" width="1" height="1" fill="#ff0000"/>
<rect x="374" y="397" width="1" height="1" fill="#000"/>
<rect x="379" y="397" width="1" height="1" fill="#000"/>
<rect x="385" y="397" width="1" height="1" fill="#ff0000"/>
<rect x="390" y="397" width="1" height="1" fill="#ff0000"/>
<rect x="395" y="397" width="1" height="1" fill="#ff0000"/>
<rect x="401" y="397" width="1" height="1" fill="#ff0000"/>
<rect x="406" y="397" width="1" height="1" fill="#ff00ff"/>
<rect x="411" y="397" width="1" height="1" fill="#000"/>
<rect x="417" y="397" width="1" height="1" fill="#0000ff"/>
<rect x="422" y="397" width="1" height="1" fill="#ff0000"/>
<rect x="427" y="397" width="1" height="1" fill="#ff0000"/>
<rect x="433" y="397" width="1" height="1" fill="#ff0000"/>
<rect x="438" y="397" width="1" height="1" fill="#ff0000"/>
<rect x="443" y="397" width="1" height="1" fill="#ff00ff"/>
<rect x="449" y="397" width="1" height="1" fill="#000"/>
<rect x="454" y="397" width="1" height="1" fill="#0000ff"/>
<rect x="459" y="397" width="1" height="1" fill="#ff0000"/>
<rect x="465" y="397" width="1" height="1" fill="#ff0000"/>
<rect x="470" y="397" width="1" height="1" fill="#ff0000"/>
<rect x="475" y="397" width="1" height="1" fill="#ff0000"/>
<rect x="481" y="397" width="1" height="1" fill="#000"/>
<rect x="486" y="397" width="1" height="1" fill="#000"/>
<rect x="491" y="397" width="1" height="1" fill="#ff0000"/>
<rect x="497" y="397" width="1" height="1" fill="#ff0000"/>
<rect x="502" y="397" width="1" height="1" fill="#ff0000"/>
<rect x="507" y="397" width="1" height="1" fill="#ff0000"/>
<rect x="513" y="397" width="1" height="1" fill="#ff00ff"/>
<rect x="518" y="397" width="1" height="1" fill="#000"/>
<rect x="523" y="397" width="1" height="1" fill="#0000ff"/>
<rect x="529" y="397" width="1" height="1" fill="#ff0000"/>
<rect x="534" y="397" width="1" height="1" fill="#ff0000"/>
<rect x="539" y="397" width="1" height="1" fill="#ff0000"/>
<rect x="545" y="397" width="1" height="1" fill="#ff0000"/>
<rect x="550" y="397" width="1" height="1" fill="#000"/>
<rect x="555" y="397" width="1" height="1" fill="#000"/>
<rect x="561" y="397" width="1" height="1" fill="#ff0000"/>
<rect x="566" y="397" width="1" height="1" fill="#ff0000"/>
<rect x="571" y="397" width="1" height="1" fill="#ff0000"/>
<rect x="577" y="397" width="1" height="1" fill="#ff0000"/>
<rect x="582" y="397" width="1" height="1" fill="#ff00ff"/>
<rect x="587" y="397" width="1" height="1" fill="#000"/>
<rect x="593" y="397" width="1" height="1" fill="#0000ff"/>
<rect x="598" y="397" width="1" height="1" fill="#ff0000"/>
<rect x="603" y="397" width="1" height="1" fill="#ff0000"/>
<rect x="609" y="397" width="1" height="1" fill="#ff0000"/>
<rect x="614" y="397" width="1" height="1" fill="#ff0000"/>
<rect x="619" y="397" width="1" height="1" fill="#ff0000"/>
<rect x="339" y="174" width="1" height="142" fill="#fff"/>
<rect x="339" y="316" width="1" height="66" fill="#000"/>
<rect x="337" y="385" width="1" height="1" fill="#0000ff"/>
<rect x="338" y="385" width="1" height="1" fill="#0000ff"/>
<rect x="339" y="385" width="1" height="1" fill="#000"/>
<rect x="340" y="385" width="1" height="1" fill="#000"/>
<rect x="341" y="385" width="1" height="1" fill="#000"/>
<rect x="337" y="393" width="1" height="1" fill="#0000ff"/>
<rect x="338" y="393" width="1" height="1" fill="#0000ff"/>
<rect x="339" y="393" width="1" height="1" fill="#000"/>
<rect x="340" y="393" width="1" height="1" fill="#000"/>
<rect x="341" y="393" width="1" height="1" fill="#000"/>
<rect x="335" y="387" width="1" height="1" fill="#0000ff"/>
<rect x="335" y="388" width="1" height="1" fill="#0000ff"/>
<rect x="335" y="389" width="1" height="1" fill="#0000ff"/>
<rect x="335" y="390" width="1" height="1" fill="#0000ff"/>
<rect x="335" y="391" width="1" height="1" fill="#0000ff"/>
<rect x="343" y="387" width="1" height="1" fill="#000"/>
<rect x="343" y="388" width="1" height="1" fill="#000"/>
<rect x="343" y="389" width="1" height="1" fill="#000"/>
<rect x="343" y="390" width="1" height="1" fill="#000"/>
<rect x="343" y="391" width="1" height="1" fill="#000"/>
<rect x="336" y="386" width="1" height="1" fill="#0000ff"/>
<rect x="342" y="386" width="1" height="1" fill="#000"/>
<rect x="336" y="392" width="1" height="1" fill="#0000ff"/>
<rect x="342" y="392" width="1" height="1" fill="#000"/>
</svg>
<div style="position:absolute;left:3px;top:407px;font-family:'Liberation Sans',sans-serif;font-weight:bold;font-style:italic;font-size:12.5px;letter-spacing:-1.1px;line-height:14px;color:#fff;text-shadow:1px 0 0 #999,-1px 0 0 #aaa,0 1px 0 #888,0 -1px 0 #bbb,2px 2px 2px #555,1px 1px 1px #777;white-space:nowrap">© KenRockwell.com</div>
</body></html>
